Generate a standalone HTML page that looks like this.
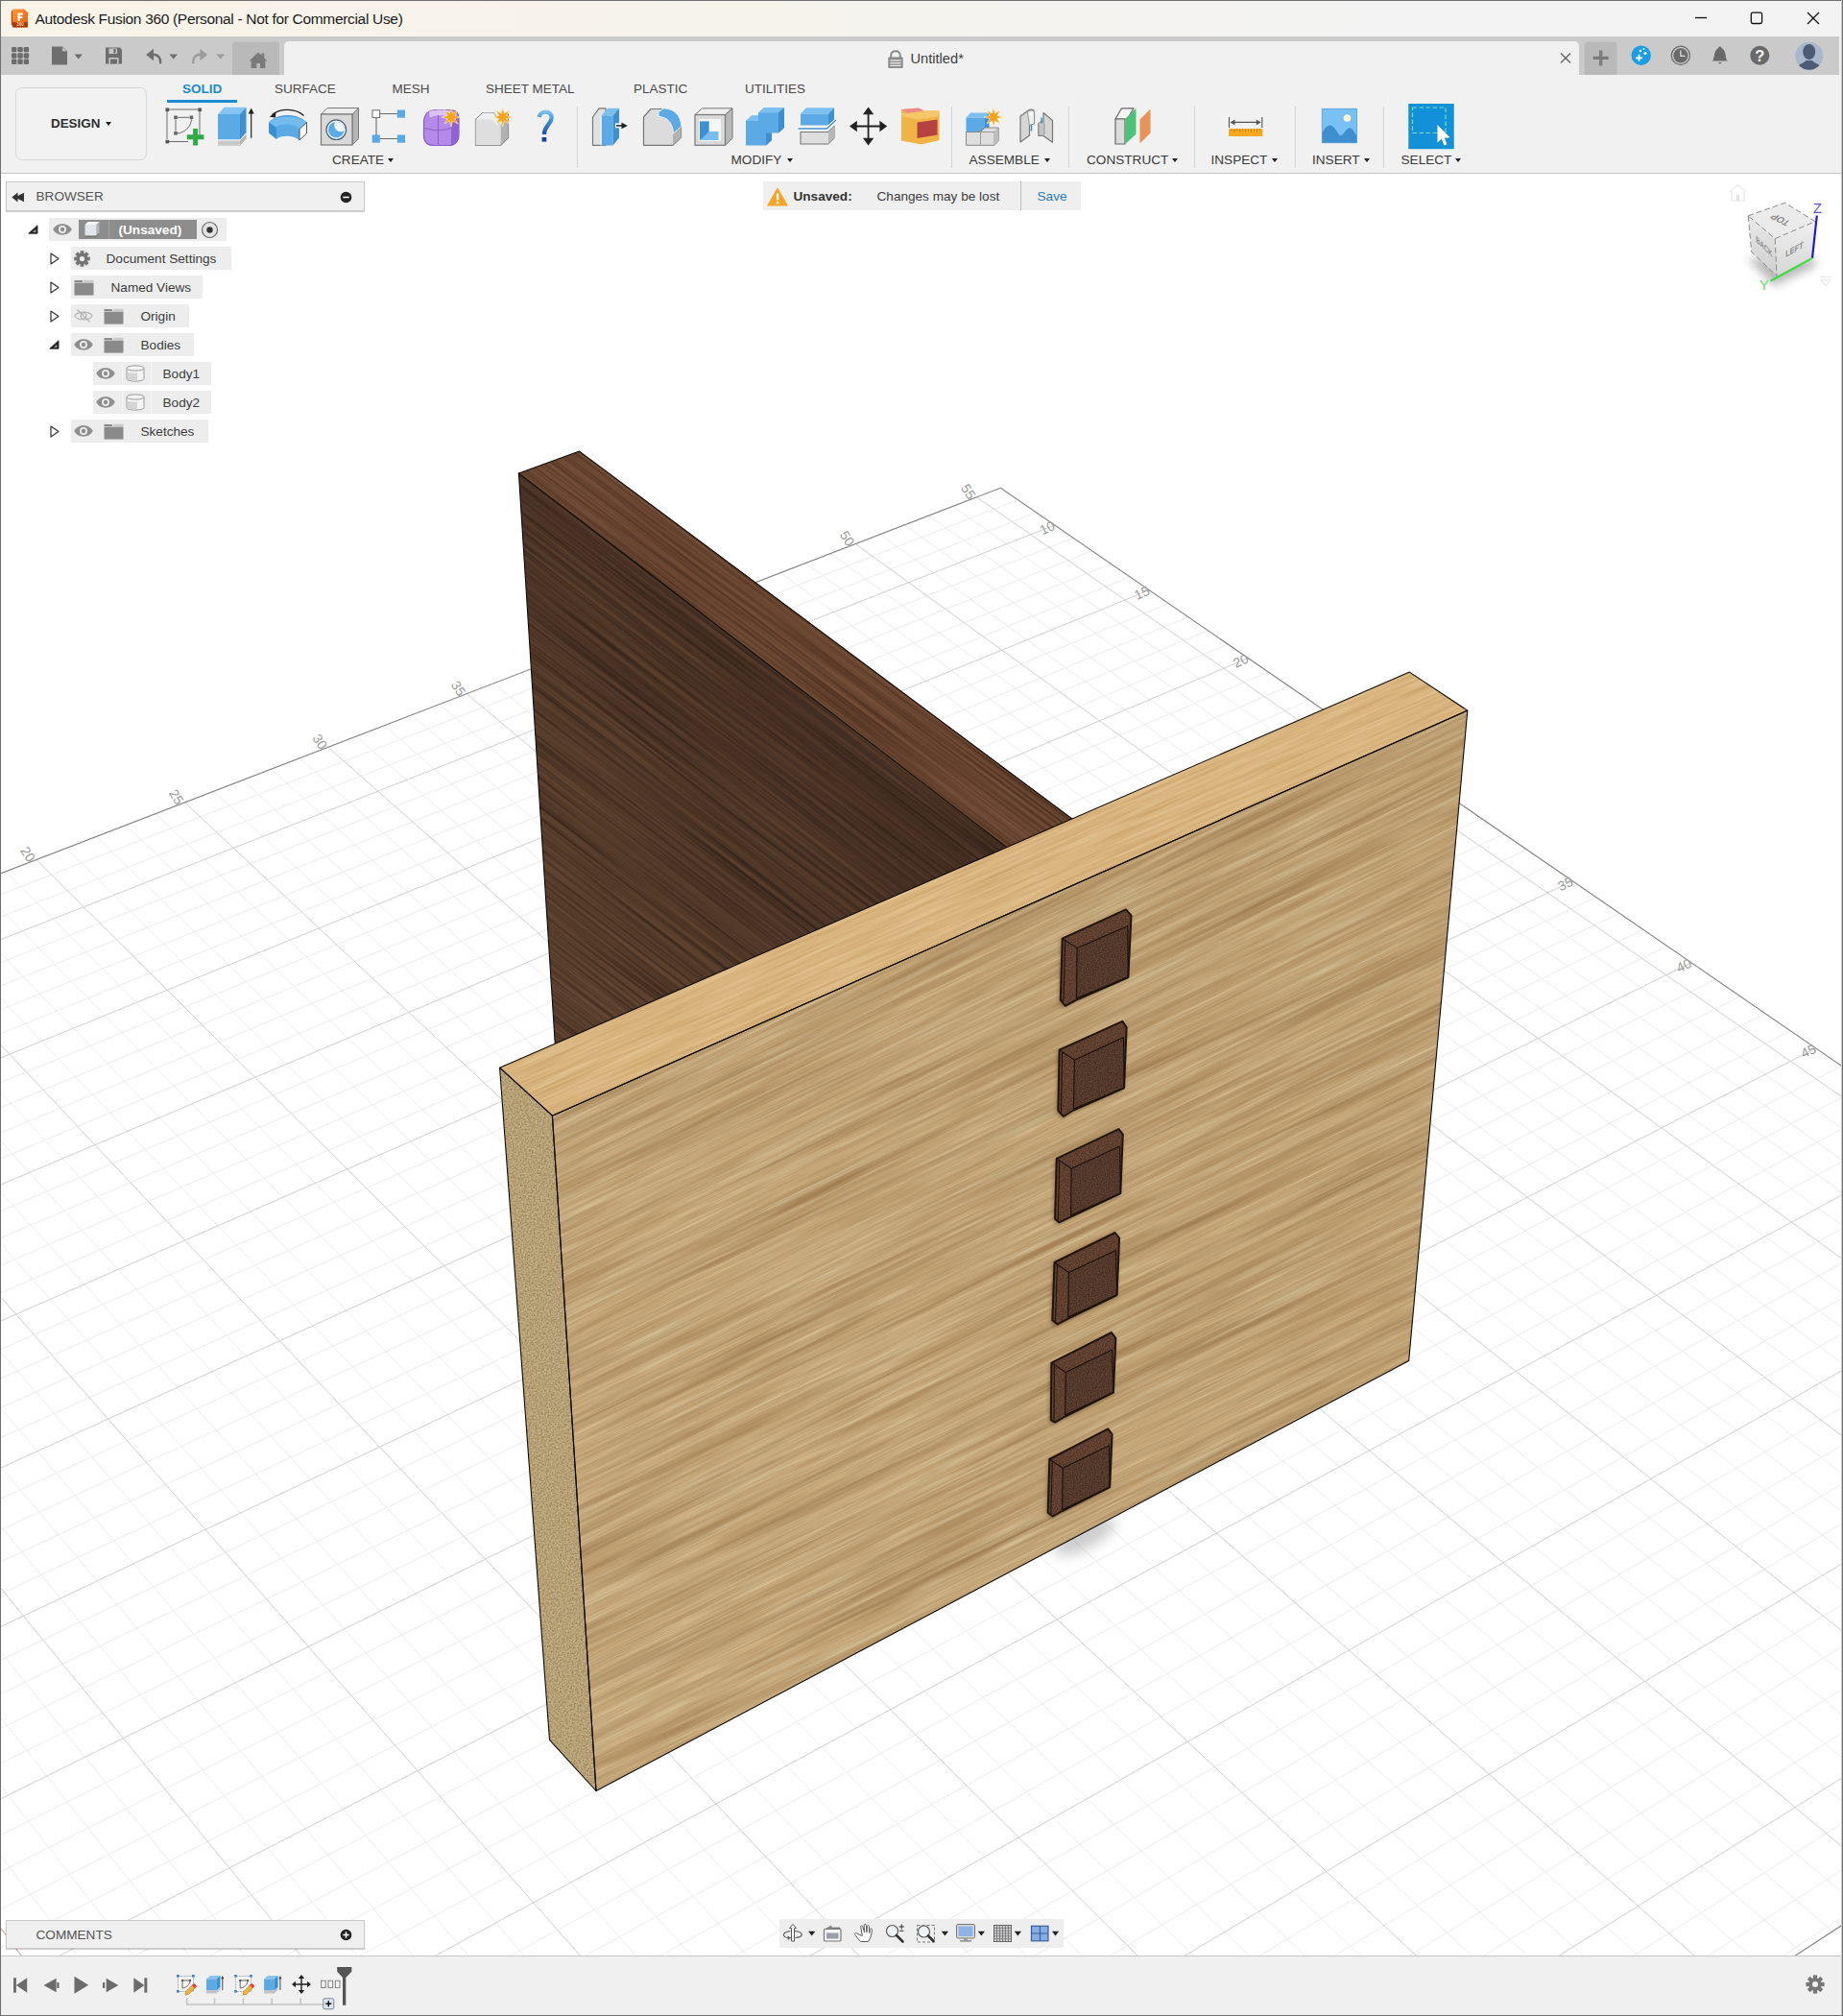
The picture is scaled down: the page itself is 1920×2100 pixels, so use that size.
<!DOCTYPE html>
<html><head><meta charset="utf-8"><title>Autodesk Fusion 360</title><style>
*{box-sizing:border-box;margin:0;padding:0}
html,body{width:1920px;height:2100px;overflow:hidden;background:#fff;font-family:"Liberation Sans",sans-serif}
.a{position:absolute}
.t{position:absolute;white-space:nowrap;line-height:1}
#titlebar{left:0;top:0;width:1920px;height:38px;background:linear-gradient(90deg,#f8f4ea 0%,#f7f3ea 30%,#f4f3ef 55%,#f3f3f3 75%)}
#band{left:0;top:38px;width:1916px;height:40px;background:#cacaca}
#toolbar{left:0;top:78px;width:1920px;height:103px;background:#f1f1f1;border-bottom:1px solid #c4c4c4}
#tlbar{left:0;top:2037px;width:1920px;height:62px;background:#f0f0f0;border-top:1px solid #c6c6c6}
.tab{font-size:13.5px;color:#4a4a4a;top:85.5px;}
.grp{font-size:13.6px;color:#3a3a3a;top:160px}
.sep{position:absolute;top:111px;width:1px;height:64px;background:#d2d2d2}
.row{position:absolute;height:24px;background:#ededed}
.rt{position:absolute;white-space:nowrap;font-size:13.6px;color:#3c3c3c;line-height:24px;top:0.5px}
.dd{position:absolute;width:0;height:0;border-left:3.5px solid transparent;border-right:3.5px solid transparent;border-top:4.5px solid #222}
</style></head><body><svg id="scene" width="1920" height="1856" viewBox="0 181 1920 1856" style="position:absolute;left:0;top:181px">
<defs>
<style>
.mi{stroke:#ebebf0;stroke-width:1}
.ma{stroke:#cfcfd2;stroke-width:1}
.ed{stroke:#808080;stroke-width:1.1}
.ol{stroke:#0c0806;stroke-width:1.1;fill:none;stroke-linejoin:round;stroke-linecap:round}
.gl{font-family:"Liberation Sans",sans-serif;font-size:14px;fill:#9a9a9a}
</style><filter id="fLfd" x="0" y="0" width="100%" height="100%" filterUnits="objectBoundingBox" color-interpolation-filters="sRGB">
<feTurbulence type="fractalNoise" baseFrequency="0.003 0.09" numOctaves="3" seed="4" result="n"/>
<feColorMatrix in="n" type="matrix" values="0 0 0 0 0.6 0 0 0 0 0.47 0 0 0 0 0.3 1.6 0 0 0 -0.62"/></filter>
<filter id="fLfl" x="0" y="0" width="100%" height="100%" filterUnits="objectBoundingBox" color-interpolation-filters="sRGB">
<feTurbulence type="fractalNoise" baseFrequency="0.005 0.3" numOctaves="2" seed="9" result="n"/>
<feColorMatrix in="n" type="matrix" values="0 0 0 0 0.9 0 0 0 0 0.83 0 0 0 0 0.68 1.3 0 0 0 -0.52"/></filter>
<filter id="fLff" x="0" y="0" width="100%" height="100%" filterUnits="objectBoundingBox" color-interpolation-filters="sRGB">
<feTurbulence type="fractalNoise" baseFrequency="0.02 0.9" numOctaves="1" seed="11" result="n"/>
<feColorMatrix in="n" type="matrix" values="0 0 0 0 0.58 0 0 0 0 0.44 0 0 0 0 0.26 0.8 0 0 0 -0.27"/></filter>
<filter id="fLt" x="0" y="0" width="100%" height="100%" filterUnits="objectBoundingBox" color-interpolation-filters="sRGB">
<feTurbulence type="fractalNoise" baseFrequency="0.012 0.5" numOctaves="3" seed="7" result="n"/>
<feColorMatrix in="n" type="matrix" values="0 0 0 0 0.74 0 0 0 0 0.55 0 0 0 0 0.32 1.1 0 0 0 -0.42"/></filter>
<filter id="fLtl" x="0" y="0" width="100%" height="100%" filterUnits="objectBoundingBox" color-interpolation-filters="sRGB">
<feTurbulence type="fractalNoise" baseFrequency="0.01 0.3" numOctaves="2" seed="17" result="n"/>
<feColorMatrix in="n" type="matrix" values="0 0 0 0 0.93 0 0 0 0 0.82 0 0 0 0 0.64 1.2 0 0 0 -0.48"/></filter>
<filter id="fLs" x="0" y="0" width="100%" height="100%" filterUnits="objectBoundingBox" color-interpolation-filters="sRGB">
<feTurbulence type="fractalNoise" baseFrequency="0.55 0.55" numOctaves="2" seed="2" result="n"/>
<feColorMatrix in="n" type="matrix" values="0 0 0 0 0.45 0 0 0 0 0.35 0 0 0 0 0.18 1.2 0 0 0 -0.42"/></filter>
<filter id="fLsl" x="0" y="0" width="100%" height="100%" filterUnits="objectBoundingBox" color-interpolation-filters="sRGB">
<feTurbulence type="fractalNoise" baseFrequency="0.5 0.5" numOctaves="1" seed="12" result="n"/>
<feColorMatrix in="n" type="matrix" values="0 0 0 0 0.88 0 0 0 0 0.8 0 0 0 0 0.62 1.0 0 0 0 -0.38"/></filter>
<filter id="fDt" x="0" y="0" width="100%" height="100%" filterUnits="objectBoundingBox" color-interpolation-filters="sRGB">
<feTurbulence type="fractalNoise" baseFrequency="0.005 0.5" numOctaves="3" seed="5" result="n"/>
<feColorMatrix in="n" type="matrix" values="0 0 0 0 0.25 0 0 0 0 0.14 0 0 0 0 0.08 1.5 0 0 0 -0.52"/></filter>
<filter id="fDtl" x="0" y="0" width="100%" height="100%" filterUnits="objectBoundingBox" color-interpolation-filters="sRGB">
<feTurbulence type="fractalNoise" baseFrequency="0.004 0.3" numOctaves="2" seed="15" result="n"/>
<feColorMatrix in="n" type="matrix" values="0 0 0 0 0.55 0 0 0 0 0.38 0 0 0 0 0.27 1.2 0 0 0 -0.5"/></filter>
<filter id="fDf" x="0" y="0" width="100%" height="100%" filterUnits="objectBoundingBox" color-interpolation-filters="sRGB">
<feTurbulence type="fractalNoise" baseFrequency="0.004 0.4" numOctaves="3" seed="8" result="n"/>
<feColorMatrix in="n" type="matrix" values="0 0 0 0 0.16 0 0 0 0 0.1 0 0 0 0 0.06 1.5 0 0 0 -0.52"/></filter>
<filter id="fDfl" x="0" y="0" width="100%" height="100%" filterUnits="objectBoundingBox" color-interpolation-filters="sRGB">
<feTurbulence type="fractalNoise" baseFrequency="0.004 0.25" numOctaves="2" seed="18" result="n"/>
<feColorMatrix in="n" type="matrix" values="0 0 0 0 0.42 0 0 0 0 0.29 0 0 0 0 0.2 1.3 0 0 0 -0.5"/></filter>
<filter id="fT" x="0" y="0" width="100%" height="100%" filterUnits="objectBoundingBox" color-interpolation-filters="sRGB">
<feTurbulence type="fractalNoise" baseFrequency="0.7 0.7" numOctaves="2" seed="3" result="n"/>
<feColorMatrix in="n" type="matrix" values="0 0 0 0 0.16 0 0 0 0 0.09 0 0 0 0 0.05 1.2 0 0 0 -0.46"/></filter>
<filter id="fTl" x="0" y="0" width="100%" height="100%" filterUnits="objectBoundingBox" color-interpolation-filters="sRGB">
<feTurbulence type="fractalNoise" baseFrequency="0.8 0.8" numOctaves="1" seed="13" result="n"/>
<feColorMatrix in="n" type="matrix" values="0 0 0 0 0.55 0 0 0 0 0.4 0 0 0 0 0.3 1.0 0 0 0 -0.42"/></filter>
<linearGradient id="gDf" gradientUnits="userSpaceOnUse" x1="950" y1="780" x2="600" y2="1040"><stop offset="0" stop-color="#3f2b20"/><stop offset="0.5" stop-color="#50382a"/><stop offset="1" stop-color="#624533"/></linearGradient>
<linearGradient id="gDt" gradientUnits="userSpaceOnUse" x1="560" y1="480" x2="1080" y2="870"><stop offset="0" stop-color="#6c4935"/><stop offset="1" stop-color="#674531"/></linearGradient>
<linearGradient id="gLf" gradientUnits="userSpaceOnUse" x1="1480" y1="800" x2="650" y2="1750"><stop offset="0" stop-color="#c1a375"/><stop offset="1" stop-color="#ccaf82"/></linearGradient><filter id="blur2" x="-30%" y="-30%" width="160%" height="160%"><feGaussianBlur stdDeviation="2"/></filter><filter id="blur8" x="-50%" y="-50%" width="200%" height="200%"><feGaussianBlur stdDeviation="7"/></filter></defs>
<line class="mi" x1="-1101.0" y1="1334.4" x2="40.0" y2="3228.4"/>
<line class="mi" x1="-1061.0" y1="1319.0" x2="92.4" y2="3194.2"/>
<line class="mi" x1="-981.9" y1="1288.5" x2="195.4" y2="3127.2"/>
<line class="mi" x1="-942.8" y1="1273.5" x2="246.0" y2="3094.3"/>
<line class="mi" x1="-904.1" y1="1258.5" x2="296.0" y2="3061.7"/>
<line class="mi" x1="-865.6" y1="1243.7" x2="345.5" y2="3029.5"/>
<line class="mi" x1="-789.6" y1="1214.4" x2="442.6" y2="2966.3"/>
<line class="mi" x1="-752.0" y1="1199.9" x2="490.4" y2="2935.2"/>
<line class="mi" x1="-714.7" y1="1185.5" x2="537.6" y2="2904.5"/>
<line class="mi" x1="-677.7" y1="1171.3" x2="584.3" y2="2874.1"/>
<line class="mi" x1="-604.6" y1="1143.1" x2="676.1" y2="2814.3"/>
<line class="mi" x1="-568.5" y1="1129.2" x2="721.2" y2="2785.0"/>
<line class="mi" x1="-532.6" y1="1115.4" x2="765.9" y2="2755.9"/>
<line class="mi" x1="-497.0" y1="1101.6" x2="810.0" y2="2727.2"/>
<line class="mi" x1="-426.7" y1="1074.5" x2="896.9" y2="2670.6"/>
<line class="mi" x1="-391.9" y1="1061.1" x2="939.7" y2="2642.8"/>
<line class="mi" x1="-357.3" y1="1047.8" x2="981.9" y2="2615.3"/>
<line class="mi" x1="-323.1" y1="1034.6" x2="1023.8" y2="2588.1"/>
<line class="mi" x1="-255.3" y1="1008.5" x2="1106.1" y2="2534.5"/>
<line class="mi" x1="-221.8" y1="995.5" x2="1146.6" y2="2508.1"/>
<line class="mi" x1="-188.5" y1="982.7" x2="1186.7" y2="2482.0"/>
<line class="mi" x1="-155.5" y1="970.0" x2="1226.4" y2="2456.2"/>
<line class="mi" x1="-90.1" y1="944.8" x2="1304.5" y2="2405.3"/>
<line class="mi" x1="-57.8" y1="932.4" x2="1343.0" y2="2380.3"/>
<line class="mi" x1="-25.7" y1="920.0" x2="1381.1" y2="2355.5"/>
<line class="mi" x1="6.1" y1="907.7" x2="1418.8" y2="2331.0"/>
<line class="mi" x1="69.1" y1="883.4" x2="1493.0" y2="2282.6"/>
<line class="mi" x1="100.3" y1="871.4" x2="1529.6" y2="2258.8"/>
<line class="mi" x1="131.2" y1="859.5" x2="1565.8" y2="2235.3"/>
<line class="mi" x1="162.0" y1="847.6" x2="1601.7" y2="2211.9"/>
<line class="mi" x1="222.8" y1="824.2" x2="1672.3" y2="2165.9"/>
<line class="mi" x1="252.9" y1="812.6" x2="1707.1" y2="2143.3"/>
<line class="mi" x1="282.8" y1="801.1" x2="1741.6" y2="2120.8"/>
<line class="mi" x1="312.4" y1="789.7" x2="1775.7" y2="2098.6"/>
<line class="mi" x1="371.2" y1="767.0" x2="1843.1" y2="2054.8"/>
<line class="mi" x1="400.2" y1="755.8" x2="1876.2" y2="2033.2"/>
<line class="mi" x1="429.1" y1="744.7" x2="1909.1" y2="2011.8"/>
<line class="mi" x1="457.8" y1="733.7" x2="1941.6" y2="1990.6"/>
<line class="mi" x1="514.5" y1="711.8" x2="2005.8" y2="1948.9"/>
<line class="mi" x1="542.6" y1="701.0" x2="2037.5" y2="1928.3"/>
<line class="mi" x1="570.5" y1="690.2" x2="2068.8" y2="1907.9"/>
<line class="mi" x1="598.2" y1="679.5" x2="2099.9" y2="1887.6"/>
<line class="mi" x1="653.1" y1="658.4" x2="2161.2" y2="1847.7"/>
<line class="mi" x1="680.2" y1="647.9" x2="2191.4" y2="1828.1"/>
<line class="mi" x1="707.2" y1="637.5" x2="2221.4" y2="1808.6"/>
<line class="mi" x1="734.0" y1="627.2" x2="2251.1" y2="1789.2"/>
<line class="mi" x1="787.1" y1="606.7" x2="2309.7" y2="1751.1"/>
<line class="mi" x1="813.4" y1="596.6" x2="2338.6" y2="1732.3"/>
<line class="mi" x1="839.5" y1="586.5" x2="2367.2" y2="1713.7"/>
<line class="mi" x1="865.4" y1="576.5" x2="2395.6" y2="1695.2"/>
<line class="mi" x1="916.8" y1="556.7" x2="2451.7" y2="1658.7"/>
<line class="mi" x1="942.2" y1="546.9" x2="2479.3" y2="1640.7"/>
<line class="mi" x1="967.5" y1="537.2" x2="2506.7" y2="1622.8"/>
<line class="mi" x1="992.6" y1="527.5" x2="2533.9" y2="1605.2"/>
<line class="mi" x1="-1089.0" y1="1354.4" x2="1060.3" y2="520.7"/>
<line class="mi" x1="-1076.2" y1="1375.6" x2="1079.4" y2="533.8"/>
<line class="mi" x1="-1050.2" y1="1418.8" x2="1118.0" y2="560.3"/>
<line class="mi" x1="-1037.0" y1="1440.7" x2="1137.6" y2="573.7"/>
<line class="mi" x1="-1023.7" y1="1462.9" x2="1157.3" y2="587.3"/>
<line class="mi" x1="-1010.2" y1="1485.3" x2="1177.2" y2="600.9"/>
<line class="mi" x1="-982.7" y1="1530.9" x2="1217.5" y2="628.6"/>
<line class="mi" x1="-968.7" y1="1554.1" x2="1237.9" y2="642.7"/>
<line class="mi" x1="-954.6" y1="1577.5" x2="1258.5" y2="656.8"/>
<line class="mi" x1="-940.3" y1="1601.2" x2="1279.2" y2="671.1"/>
<line class="mi" x1="-911.3" y1="1649.4" x2="1321.3" y2="700.0"/>
<line class="mi" x1="-896.5" y1="1674.0" x2="1342.7" y2="714.7"/>
<line class="mi" x1="-881.5" y1="1698.8" x2="1364.2" y2="729.5"/>
<line class="mi" x1="-866.4" y1="1723.9" x2="1385.9" y2="744.4"/>
<line class="mi" x1="-835.6" y1="1775.0" x2="1429.9" y2="774.6"/>
<line class="mi" x1="-819.9" y1="1801.0" x2="1452.2" y2="790.0"/>
<line class="mi" x1="-804.1" y1="1827.4" x2="1474.7" y2="805.4"/>
<line class="mi" x1="-788.0" y1="1854.0" x2="1497.4" y2="821.0"/>
<line class="mi" x1="-755.3" y1="1908.3" x2="1543.5" y2="852.7"/>
<line class="mi" x1="-738.7" y1="1935.9" x2="1566.9" y2="868.8"/>
<line class="mi" x1="-721.8" y1="1963.9" x2="1590.4" y2="885.0"/>
<line class="mi" x1="-704.8" y1="1992.2" x2="1614.2" y2="901.3"/>
<line class="mi" x1="-670.0" y1="2049.9" x2="1662.5" y2="934.5"/>
<line class="mi" x1="-652.3" y1="2079.3" x2="1687.0" y2="951.3"/>
<line class="mi" x1="-634.4" y1="2109.1" x2="1711.7" y2="968.3"/>
<line class="mi" x1="-616.2" y1="2139.3" x2="1736.7" y2="985.5"/>
<line class="mi" x1="-579.1" y1="2200.8" x2="1787.3" y2="1020.3"/>
<line class="mi" x1="-560.2" y1="2232.1" x2="1813.0" y2="1037.9"/>
<line class="mi" x1="-541.1" y1="2263.9" x2="1839.0" y2="1055.7"/>
<line class="mi" x1="-521.7" y1="2296.1" x2="1865.2" y2="1073.8"/>
<line class="mi" x1="-482.1" y1="2361.8" x2="1918.4" y2="1110.3"/>
<line class="mi" x1="-462.0" y1="2395.3" x2="1945.4" y2="1128.9"/>
<line class="mi" x1="-441.5" y1="2429.2" x2="1972.6" y2="1147.6"/>
<line class="mi" x1="-420.7" y1="2463.7" x2="2000.2" y2="1166.5"/>
<line class="mi" x1="-378.4" y1="2534.0" x2="2056.1" y2="1205.0"/>
<line class="mi" x1="-356.8" y1="2569.8" x2="2084.5" y2="1224.5"/>
<line class="mi" x1="-334.9" y1="2606.2" x2="2113.2" y2="1244.2"/>
<line class="mi" x1="-312.6" y1="2643.1" x2="2142.2" y2="1264.1"/>
<line class="mi" x1="-267.2" y1="2718.6" x2="2201.1" y2="1304.6"/>
<line class="mi" x1="-244.0" y1="2757.1" x2="2231.0" y2="1325.2"/>
<line class="mi" x1="-220.4" y1="2796.2" x2="2261.2" y2="1345.9"/>
<line class="mi" x1="-196.5" y1="2835.8" x2="2291.8" y2="1366.9"/>
<line class="mi" x1="-147.7" y1="2917.0" x2="2353.9" y2="1409.6"/>
<line class="mi" x1="-122.7" y1="2958.4" x2="2385.4" y2="1431.3"/>
<line class="mi" x1="-97.3" y1="3000.5" x2="2417.3" y2="1453.2"/>
<line class="mi" x1="-71.6" y1="3043.3" x2="2449.6" y2="1475.4"/>
<line class="mi" x1="-18.8" y1="3130.8" x2="2515.1" y2="1520.4"/>
<line class="mi" x1="8.1" y1="3175.6" x2="2548.5" y2="1543.3"/>
<line class="mi" x1="35.5" y1="3221.0" x2="2582.2" y2="1566.5"/>
<line class="ma" x1="-1021.3" y1="1303.7" x2="144.2" y2="3160.5"/>
<line class="ma" x1="-827.4" y1="1229.0" x2="394.3" y2="2997.7"/>
<line class="ma" x1="-641.0" y1="1157.1" x2="630.5" y2="2844.0"/>
<line class="ma" x1="-461.7" y1="1088.0" x2="853.7" y2="2698.7"/>
<line class="ma" x1="-289.0" y1="1021.5" x2="1065.2" y2="2561.1"/>
<line class="ma" x1="-122.7" y1="957.4" x2="1265.7" y2="2430.6"/>
<line class="ma" x1="37.7" y1="895.5" x2="1456.1" y2="2306.7"/>
<line class="ma" x1="192.5" y1="835.9" x2="1637.2" y2="2188.8"/>
<line class="ma" x1="341.9" y1="778.3" x2="1809.6" y2="2076.6"/>
<line class="ma" x1="486.2" y1="722.7" x2="1973.9" y2="1969.7"/>
<line class="ma" x1="625.7" y1="668.9" x2="2130.7" y2="1867.6"/>
<line class="ma" x1="760.6" y1="616.9" x2="2280.5" y2="1770.1"/>
<line class="ma" x1="891.2" y1="566.6" x2="2423.8" y2="1676.9"/>
<line class="ma" x1="1017.6" y1="517.9" x2="2560.9" y2="1587.6"/>
<line class="ma" x1="-1063.3" y1="1397.1" x2="1098.6" y2="547.0"/>
<line class="ma" x1="-996.5" y1="1508.0" x2="1197.2" y2="614.7"/>
<line class="ma" x1="-925.9" y1="1625.2" x2="1300.2" y2="685.5"/>
<line class="ma" x1="-851.1" y1="1749.3" x2="1407.8" y2="759.4"/>
<line class="ma" x1="-771.8" y1="1881.0" x2="1520.4" y2="836.8"/>
<line class="ma" x1="-687.5" y1="2020.9" x2="1638.3" y2="917.8"/>
<line class="ma" x1="-597.8" y1="2169.8" x2="1761.9" y2="1002.8"/>
<line class="ma" x1="-502.1" y1="2328.7" x2="1891.6" y2="1091.9"/>
<line class="ma" x1="-399.7" y1="2498.6" x2="2028.0" y2="1185.7"/>
<line class="ma" x1="-290.1" y1="2680.6" x2="2171.5" y2="1284.3"/>
<line class="ma" x1="-172.3" y1="2876.1" x2="2322.7" y2="1388.1"/>
<line class="ma" x1="-45.4" y1="3086.7" x2="2482.2" y2="1497.8"/>
<line class="ed" x1="-1101.0" y1="1334.4" x2="1042.4" y2="508.3"/>
<line class="ed" x1="1042.4" y1="508.3" x2="2587.6" y2="1570.2"/>
<line class="ed" x1="40.0" y1="3228.4" x2="2587.6" y2="1570.2"/>
<line x1="-641.0" y1="1157.1" x2="630.5" y2="2844.0" stroke="#d8a0a0" stroke-width="1"/>
<text class="gl" transform="translate(29.2,899.0) rotate(57)" text-anchor="end">20</text>
<text class="gl" transform="translate(184.0,839.4) rotate(57)" text-anchor="end">25</text>
<text class="gl" transform="translate(333.4,781.8) rotate(57)" text-anchor="end">30</text>
<text class="gl" transform="translate(477.7,726.2) rotate(57)" text-anchor="end">35</text>
<text class="gl" transform="translate(882.7,570.1) rotate(57)" text-anchor="end">50</text>
<text class="gl" transform="translate(1009.1,521.4) rotate(57)" text-anchor="end">55</text>
<text class="gl" transform="translate(1100.1,551.0) rotate(-25)" text-anchor="end">10</text>
<text class="gl" transform="translate(1198.7,618.7) rotate(-25)" text-anchor="end">15</text>
<text class="gl" transform="translate(1301.7,689.5) rotate(-25)" text-anchor="end">20</text>
<text class="gl" transform="translate(1639.8,921.8) rotate(-25)" text-anchor="end">35</text>
<text class="gl" transform="translate(1763.4,1006.8) rotate(-25)" text-anchor="end">40</text>
<text class="gl" transform="translate(1893.1,1095.9) rotate(-25)" text-anchor="end">45</text>
<ellipse cx="1130" cy="1600" rx="36" ry="13" fill="#9a9a9a" opacity="0.5" filter="url(#blur8)" transform="rotate(-28 1130 1600)"/>
<clipPath id="cDt"><polygon points="540.4,492.9 603.6,470.1 1125.0,859.0 1056.0,888.0"/></clipPath><g clip-path="url(#cDt)"><polygon points="540.4,492.9 603.6,470.1 1125.0,859.0 1056.0,888.0" fill="url(#gDt)"/><rect x="463" y="310" width="739" height="739" fill="none" filter="url(#fDt)" transform="rotate(36.6 833 679)"/><rect x="463" y="310" width="739" height="739" fill="none" filter="url(#fDtl)" transform="rotate(36.6 833 679)"/></g>
<clipPath id="cDf"><polygon points="540.4,492.9 1056.0,888.0 1050.0,895.0 578.8,1096.0"/></clipPath><g clip-path="url(#cDf)"><polygon points="540.4,492.9 1056.0,888.0 1050.0,895.0 578.8,1096.0" fill="url(#gDf)"/><rect x="391" y="388" width="813" height="813" fill="none" filter="url(#fDf)" transform="rotate(37.2 798 794)"/><rect x="391" y="388" width="813" height="813" fill="none" filter="url(#fDfl)" transform="rotate(37.2 798 794)"/></g>
<polyline class="ol" points="1056.0,888.0 540.4,492.9 603.6,470.1 1125.0,859.0"/>
<polyline class="ol" points="578.8,1096.0 540.4,492.9"/>
<clipPath id="cLt"><polygon points="520.6,1112.2 1468.4,700.1 1528.8,740.1 575.4,1162.2"/></clipPath><g clip-path="url(#cLt)"><polygon points="520.6,1112.2 1468.4,700.1 1528.8,740.1 575.4,1162.2" fill="#d9b57f"/><rect x="460" y="367" width="1129" height="1129" fill="none" filter="url(#fLt)" transform="rotate(-23.6 1025 931)"/><rect x="460" y="367" width="1129" height="1129" fill="none" filter="url(#fLtl)" transform="rotate(-23.6 1025 931)"/></g>
<clipPath id="cLf"><polygon points="575.4,1162.2 1528.8,740.1 1467.7,1417.4 621.0,1865.5"/></clipPath><g clip-path="url(#cLf)"><polygon points="575.4,1162.2 1528.8,740.1 1467.7,1417.4 621.0,1865.5" fill="url(#gLf)"/><rect x="305" y="555" width="1495" height="1495" fill="none" filter="url(#fLfd)" transform="rotate(-25.8 1052 1303)"/><rect x="305" y="555" width="1495" height="1495" fill="none" filter="url(#fLfl)" transform="rotate(-25.8 1052 1303)"/><rect x="305" y="555" width="1495" height="1495" fill="none" filter="url(#fLff)" transform="rotate(-25.8 1052 1303)"/></g>
<g clip-path="url(#cLf)" opacity="0.55"><rect x="300" y="500" width="1500" height="1600" fill="none" /></g>
<clipPath id="cLs"><polygon points="520.6,1112.2 575.4,1162.2 621.0,1865.5 572.5,1812.3"/></clipPath><g clip-path="url(#cLs)"><polygon points="520.6,1112.2 575.4,1162.2 621.0,1865.5 572.5,1812.3" fill="#bda77e"/><rect x="181" y="1099" width="780" height="780" fill="none" filter="url(#fLs)" transform="rotate(0 571 1489)"/><rect x="181" y="1099" width="780" height="780" fill="none" filter="url(#fLsl)" transform="rotate(0 571 1489)"/></g>
<polygon class="ol" points="520.6,1112.2 1468.4,700.1 1528.8,740.1 575.4,1162.2"/>
<polygon class="ol" points="575.4,1162.2 1528.8,740.1 1467.7,1417.4 621.0,1865.5"/>
<polygon class="ol" points="520.6,1112.2 575.4,1162.2 621.0,1865.5 572.5,1812.3"/>
<polygon points="1106.7,977.7 1173.0,947.4 1178.5,953.6 1175.4,1018.0 1121.5,1041.5 1109.8,1047.8 1104.8,1041.6" fill="#4a3018" opacity="0.5" transform="translate(-1.5,2)" filter="url(#blur2)"/>
<clipPath id="cTo0"><polygon points="1106.7,977.7 1173.0,947.4 1178.5,953.6 1175.4,1018.0 1121.5,1041.5 1109.8,1047.8 1104.8,1041.6"/></clipPath><g clip-path="url(#cTo0)"><polygon points="1106.7,977.7 1173.0,947.4 1178.5,953.6 1175.4,1018.0 1121.5,1041.5 1109.8,1047.8 1104.8,1041.6" fill="#634232"/><rect x="1069" y="925" width="145" height="145" fill="none" filter="url(#fT)" transform="rotate(0 1142 998)"/><rect x="1069" y="925" width="145" height="145" fill="none" filter="url(#fTl)" transform="rotate(0 1142 998)"/></g>
<clipPath id="cTi0"><polygon points="1122.1,987.6 1174.8,964.7 1175.4,1018.0 1121.5,1039.7"/></clipPath><g clip-path="url(#cTi0)"><polygon points="1122.1,987.6 1174.8,964.7 1175.4,1018.0 1121.5,1039.7" fill="#54392c"/><rect x="1092" y="946" width="112" height="112" fill="none" filter="url(#fT)" transform="rotate(0 1148 1002)"/><rect x="1092" y="946" width="112" height="112" fill="none" filter="url(#fTl)" transform="rotate(0 1148 1002)"/></g>
<polygon class="ol" style="stroke-width:2;stroke:#22140d" points="1106.7,977.7 1173.0,947.4 1178.5,953.6 1175.4,1018.0 1121.5,1041.5 1109.8,1047.8 1104.8,1041.6"/>
<polygon class="ol" style="stroke-width:1.1;stroke:#1a100b" points="1122.1,987.6 1174.8,964.7 1175.4,1018.0 1121.5,1039.7"/>
<line class="ol" style="stroke-width:1.1;stroke:#1a100b" x1="1106.7" y1="977.7" x2="1122.1" y2="987.6"/>
<line class="ol" style="stroke-width:1;stroke:#1a100b" x1="1109.7" y1="980.2" x2="1108.0" y2="1042.6"/>
<polygon points="1103.6,1093.6 1169.3,1063.9 1173.6,1070.1 1171.1,1133.3 1118.4,1156.5 1107.9,1163.0 1102.3,1156.8" fill="#4a3018" opacity="0.5" transform="translate(-1.5,2)" filter="url(#blur2)"/>
<clipPath id="cTo1"><polygon points="1103.6,1093.6 1169.3,1063.9 1173.6,1070.1 1171.1,1133.3 1118.4,1156.5 1107.9,1163.0 1102.3,1156.8"/></clipPath><g clip-path="url(#cTo1)"><polygon points="1103.6,1093.6 1169.3,1063.9 1173.6,1070.1 1171.1,1133.3 1118.4,1156.5 1107.9,1163.0 1102.3,1156.8" fill="#634232"/><rect x="1067" y="1042" width="142" height="142" fill="none" filter="url(#fT)" transform="rotate(0 1138 1113)"/><rect x="1067" y="1042" width="142" height="142" fill="none" filter="url(#fTl)" transform="rotate(0 1138 1113)"/></g>
<clipPath id="cTi1"><polygon points="1119.4,1104.2 1170.5,1080.6 1171.1,1133.3 1118.4,1155.0"/></clipPath><g clip-path="url(#cTi1)"><polygon points="1119.4,1104.2 1170.5,1080.6 1171.1,1133.3 1118.4,1155.0" fill="#54392c"/><rect x="1089" y="1062" width="111" height="111" fill="none" filter="url(#fT)" transform="rotate(0 1145 1118)"/><rect x="1089" y="1062" width="111" height="111" fill="none" filter="url(#fTl)" transform="rotate(0 1145 1118)"/></g>
<polygon class="ol" style="stroke-width:2;stroke:#22140d" points="1103.6,1093.6 1169.3,1063.9 1173.6,1070.1 1171.1,1133.3 1118.4,1156.5 1107.9,1163.0 1102.3,1156.8"/>
<polygon class="ol" style="stroke-width:1.1;stroke:#1a100b" points="1119.4,1104.2 1170.5,1080.6 1171.1,1133.3 1118.4,1155.0"/>
<line class="ol" style="stroke-width:1.1;stroke:#1a100b" x1="1103.6" y1="1093.6" x2="1119.4" y2="1104.2"/>
<line class="ol" style="stroke-width:1;stroke:#1a100b" x1="1106.6" y1="1096.1" x2="1105.5" y2="1157.8"/>
<polygon points="1100.7,1206.9 1165.5,1176.1 1169.8,1181.7 1167.3,1243.1 1115.6,1267.5 1103.5,1273.4 1099.1,1269.7" fill="#4a3018" opacity="0.5" transform="translate(-1.5,2)" filter="url(#blur2)"/>
<clipPath id="cTo2"><polygon points="1100.7,1206.9 1165.5,1176.1 1169.8,1181.7 1167.3,1243.1 1115.6,1267.5 1103.5,1273.4 1099.1,1269.7"/></clipPath><g clip-path="url(#cTo2)"><polygon points="1100.7,1206.9 1165.5,1176.1 1169.8,1181.7 1167.3,1243.1 1115.6,1267.5 1103.5,1273.4 1099.1,1269.7" fill="#634232"/><rect x="1064" y="1155" width="140" height="140" fill="none" filter="url(#fT)" transform="rotate(0 1134 1225)"/><rect x="1064" y="1155" width="140" height="140" fill="none" filter="url(#fTl)" transform="rotate(0 1134 1225)"/></g>
<clipPath id="cTi2"><polygon points="1116.1,1217.3 1166.7,1194.1 1167.3,1243.1 1115.6,1266.0"/></clipPath><g clip-path="url(#cTi2)"><polygon points="1116.1,1217.3 1166.7,1194.1 1167.3,1243.1 1115.6,1266.0" fill="#54392c"/><rect x="1087" y="1176" width="109" height="109" fill="none" filter="url(#fT)" transform="rotate(0 1141 1230)"/><rect x="1087" y="1176" width="109" height="109" fill="none" filter="url(#fTl)" transform="rotate(0 1141 1230)"/></g>
<polygon class="ol" style="stroke-width:2;stroke:#22140d" points="1100.7,1206.9 1165.5,1176.1 1169.8,1181.7 1167.3,1243.1 1115.6,1267.5 1103.5,1273.4 1099.1,1269.7"/>
<polygon class="ol" style="stroke-width:1.1;stroke:#1a100b" points="1116.1,1217.3 1166.7,1194.1 1167.3,1243.1 1115.6,1266.0"/>
<line class="ol" style="stroke-width:1.1;stroke:#1a100b" x1="1100.7" y1="1206.9" x2="1116.1" y2="1217.3"/>
<line class="ol" style="stroke-width:1;stroke:#1a100b" x1="1103.7" y1="1209.4" x2="1102.3" y2="1270.7"/>
<polygon points="1098.5,1315.0 1161.7,1284.0 1166.1,1289.5 1163.6,1349.0 1112.8,1373.5 1101.6,1379.4 1096.3,1375.1" fill="#4a3018" opacity="0.5" transform="translate(-1.5,2)" filter="url(#blur2)"/>
<clipPath id="cTo3"><polygon points="1098.5,1315.0 1161.7,1284.0 1166.1,1289.5 1163.6,1349.0 1112.8,1373.5 1101.6,1379.4 1096.3,1375.1"/></clipPath><g clip-path="url(#cTo3)"><polygon points="1098.5,1315.0 1161.7,1284.0 1166.1,1289.5 1163.6,1349.0 1112.8,1373.5 1101.6,1379.4 1096.3,1375.1" fill="#634232"/><rect x="1062" y="1263" width="138" height="138" fill="none" filter="url(#fT)" transform="rotate(0 1131 1332)"/><rect x="1062" y="1263" width="138" height="138" fill="none" filter="url(#fTl)" transform="rotate(0 1131 1332)"/></g>
<clipPath id="cTi3"><polygon points="1113.4,1325.5 1162.4,1302.6 1163.6,1349.0 1112.8,1372.0"/></clipPath><g clip-path="url(#cTi3)"><polygon points="1113.4,1325.5 1162.4,1302.6 1163.6,1349.0 1112.8,1372.0" fill="#54392c"/><rect x="1085" y="1284" width="106" height="106" fill="none" filter="url(#fT)" transform="rotate(0 1138 1337)"/><rect x="1085" y="1284" width="106" height="106" fill="none" filter="url(#fTl)" transform="rotate(0 1138 1337)"/></g>
<polygon class="ol" style="stroke-width:2;stroke:#22140d" points="1098.5,1315.0 1161.7,1284.0 1166.1,1289.5 1163.6,1349.0 1112.8,1373.5 1101.6,1379.4 1096.3,1375.1"/>
<polygon class="ol" style="stroke-width:1.1;stroke:#1a100b" points="1113.4,1325.5 1162.4,1302.6 1163.6,1349.0 1112.8,1372.0"/>
<line class="ol" style="stroke-width:1.1;stroke:#1a100b" x1="1098.5" y1="1315.0" x2="1113.4" y2="1325.5"/>
<line class="ol" style="stroke-width:1;stroke:#1a100b" x1="1101.5" y1="1317.5" x2="1099.5" y2="1376.1"/>
<polygon points="1095.4,1419.6 1158.0,1388.0 1162.4,1394.2 1159.9,1450.6 1109.7,1475.5 1099.1,1481.6 1094.8,1479.1" fill="#4a3018" opacity="0.5" transform="translate(-1.5,2)" filter="url(#blur2)"/>
<clipPath id="cTo4"><polygon points="1095.4,1419.6 1158.0,1388.0 1162.4,1394.2 1159.9,1450.6 1109.7,1475.5 1099.1,1481.6 1094.8,1479.1"/></clipPath><g clip-path="url(#cTo4)"><polygon points="1095.4,1419.6 1158.0,1388.0 1162.4,1394.2 1159.9,1450.6 1109.7,1475.5 1099.1,1481.6 1094.8,1479.1" fill="#634232"/><rect x="1061" y="1367" width="135" height="135" fill="none" filter="url(#fT)" transform="rotate(0 1129 1435)"/><rect x="1061" y="1367" width="135" height="135" fill="none" filter="url(#fTl)" transform="rotate(0 1129 1435)"/></g>
<clipPath id="cTi4"><polygon points="1110.3,1429.5 1158.6,1405.9 1159.9,1450.6 1109.7,1474.1"/></clipPath><g clip-path="url(#cTi4)"><polygon points="1110.3,1429.5 1158.6,1405.9 1159.9,1450.6 1109.7,1474.1" fill="#54392c"/><rect x="1082" y="1388" width="105" height="105" fill="none" filter="url(#fT)" transform="rotate(0 1135 1440)"/><rect x="1082" y="1388" width="105" height="105" fill="none" filter="url(#fTl)" transform="rotate(0 1135 1440)"/></g>
<polygon class="ol" style="stroke-width:2;stroke:#22140d" points="1095.4,1419.6 1158.0,1388.0 1162.4,1394.2 1159.9,1450.6 1109.7,1475.5 1099.1,1481.6 1094.8,1479.1"/>
<polygon class="ol" style="stroke-width:1.1;stroke:#1a100b" points="1110.3,1429.5 1158.6,1405.9 1159.9,1450.6 1109.7,1474.1"/>
<line class="ol" style="stroke-width:1.1;stroke:#1a100b" x1="1095.4" y1="1419.6" x2="1110.3" y2="1429.5"/>
<line class="ol" style="stroke-width:1;stroke:#1a100b" x1="1098.4" y1="1422.1" x2="1098.0" y2="1480.1"/>
<polygon points="1093.3,1520.0 1154.3,1488.4 1158.6,1494.0 1156.2,1549.1 1106.6,1574.0 1096.7,1579.5 1091.7,1575.8" fill="#4a3018" opacity="0.5" transform="translate(-1.5,2)" filter="url(#blur2)"/>
<clipPath id="cTo5"><polygon points="1093.3,1520.0 1154.3,1488.4 1158.6,1494.0 1156.2,1549.1 1106.6,1574.0 1096.7,1579.5 1091.7,1575.8"/></clipPath><g clip-path="url(#cTo5)"><polygon points="1093.3,1520.0 1154.3,1488.4 1158.6,1494.0 1156.2,1549.1 1106.6,1574.0 1096.7,1579.5 1091.7,1575.8" fill="#634232"/><rect x="1059" y="1467" width="133" height="133" fill="none" filter="url(#fT)" transform="rotate(0 1125 1534)"/><rect x="1059" y="1467" width="133" height="133" fill="none" filter="url(#fTl)" transform="rotate(0 1125 1534)"/></g>
<clipPath id="cTi5"><polygon points="1107.2,1529.3 1155.5,1505.7 1156.2,1549.1 1106.6,1572.7"/></clipPath><g clip-path="url(#cTi5)"><polygon points="1107.2,1529.3 1155.5,1505.7 1156.2,1549.1 1106.6,1572.7" fill="#54392c"/><rect x="1080" y="1488" width="103" height="103" fill="none" filter="url(#fT)" transform="rotate(0 1131 1539)"/><rect x="1080" y="1488" width="103" height="103" fill="none" filter="url(#fTl)" transform="rotate(0 1131 1539)"/></g>
<polygon class="ol" style="stroke-width:2;stroke:#22140d" points="1093.3,1520.0 1154.3,1488.4 1158.6,1494.0 1156.2,1549.1 1106.6,1574.0 1096.7,1579.5 1091.7,1575.8"/>
<polygon class="ol" style="stroke-width:1.1;stroke:#1a100b" points="1107.2,1529.3 1155.5,1505.7 1156.2,1549.1 1106.6,1572.7"/>
<line class="ol" style="stroke-width:1.1;stroke:#1a100b" x1="1093.3" y1="1520.0" x2="1107.2" y2="1529.3"/>
<line class="ol" style="stroke-width:1;stroke:#1a100b" x1="1096.3" y1="1522.5" x2="1094.9" y2="1576.8"/>
</svg><div id="titlebar" class="a"></div><div id="band" class="a"></div><div class="a" style="left:1916px;top:38px;width:4px;height:40px;background:#f0f0f0"></div><div id="toolbar" class="a"></div><div id="tlbar" class="a"></div><svg class="a" style="left:11px;top:9px" width="19" height="20" viewBox="0 0 19 20"><defs><linearGradient id="fg" x1="0" y1="0" x2="1" y2="1"><stop offset="0" stop-color="#ff9a3c"/><stop offset="1" stop-color="#e8590c"/></linearGradient></defs><path d="M2 1.5 Q2 0.5 3 0.5 H14 L18 4 V18 Q18 19.5 16.5 19.5 H3.5 Q2 19.5 2 18Z" fill="url(#fg)"/><path d="M0.8 3 L2 1.5 V18 L0.8 16.5Z" fill="#b8460a"/><rect x="2" y="14" width="16" height="5.5" rx="1" fill="#a33c07"/><path d="M7.5 4.5 H13 V6.5 H9.8 V8.2 H12.4 V10.1 H9.8 V12.8 H7.5Z" fill="#fff"/><text x="10" y="18.300" text-anchor="middle" font-family="Liberation Sans,sans-serif" font-weight="bold" font-size="4.600" fill="#ffc59a">360</text></svg><div class="t" id="ttl" style="left:36.5px;top:11.5px;font-size:15.5px;color:#1b1b1b;letter-spacing:-0.32px">Autodesk Fusion 360 (Personal - Not for Commercial Use)</div><svg class="a" style="left:1760px;top:8px" width="150" height="22" viewBox="1760 8 150 22"><g stroke="#111" stroke-width="1.3" fill="none"><path d="M1766 18.5 H1778"/><rect x="1824.3" y="13.2" width="11.3" height="11.3" rx="1.8"/><path d="M1883 13 L1895 25 M1895 13 L1883 25"/></g></svg><svg class="a" style="left:0;top:38px" width="300" height="40" viewBox="0 38 300 40"><rect x="12.00" y="48.90" width="5.400" height="5.400" rx="1.200" fill="#6c6c6c"/><rect x="12.00" y="55.25" width="5.400" height="5.400" rx="1.200" fill="#6c6c6c"/><rect x="12.00" y="61.60" width="5.400" height="5.400" rx="1.200" fill="#6c6c6c"/><rect x="18.35" y="48.90" width="5.400" height="5.400" rx="1.200" fill="#6c6c6c"/><rect x="18.35" y="55.25" width="5.400" height="5.400" rx="1.200" fill="#6c6c6c"/><rect x="18.35" y="61.60" width="5.400" height="5.400" rx="1.200" fill="#6c6c6c"/><rect x="24.70" y="48.90" width="5.400" height="5.400" rx="1.200" fill="#6c6c6c"/><rect x="24.70" y="55.25" width="5.400" height="5.400" rx="1.200" fill="#6c6c6c"/><rect x="24.70" y="61.60" width="5.400" height="5.400" rx="1.200" fill="#6c6c6c"/><path d="M54 48.5 H64.5 L70 54 V67.5 H54Z" fill="#6e6e6e"/><path d="M64.8 48.5 V53.7 H70Z" fill="#c9c9c9" stroke="#6e6e6e" stroke-width="0.6"/><path d="M77.5 56.5 H86 L81.75 61.5Z" fill="#6e6e6e"/><path d="M110 49.5 H125 L127 51.5 V66.5 H110Z" fill="#6e6e6e"/><rect x="113.5" y="50.5" width="8.5" height="5.5" fill="#c9c9c9"/><rect x="118.3" y="51" width="2.3" height="4.3" fill="#6e6e6e"/><rect x="113.5" y="60" width="10" height="6.5" fill="#c9c9c9"/><rect x="115" y="61.5" width="7" height="5" fill="#6e6e6e"/><path d="M159 56.800 C164.500 56.800 167.200 59.800 167.200 65.300" stroke="#6e6e6e" stroke-width="2.400" fill="none" stroke-linecap="round"/><path d="M152.200 57 L160 50.800 V63.200Z" fill="#6e6e6e"/><path d="M176.500 56.500 H185 L180.750 61.500Z" fill="#6e6e6e"/><path d="M209.400 56.800 C203.900 56.800 201.200 59.800 201.200 65.300" stroke="#9c9c9c" stroke-width="2.400" fill="none" stroke-linecap="round"/><path d="M216.200 57 L208.400 50.800 V63.200Z" fill="#9c9c9c"/><path d="M225.500 56.500 H234 L229.750 61.500Z" fill="#9c9c9c"/><path d="M242 78 V47 Q242 43.5 245.500 43.5 H287.500 Q291 43.500 291 47 V78Z" fill="#b9b9b9"/><path d="M259.500 63.500 L269 54.500 L272.500 57.800 V55.500 H275.200 V60.300 L278.500 63.500 H276.300 V71 H271 V66 H267.300 V71 H261.700 V63.500Z" fill="#7a7a7a"/></svg><div class="a" style="left:296px;top:43px;width:1349px;height:36px;background:#f1f1f1;border-radius:5px 5px 0 0"></div><svg class="a" style="left:925px;top:52px" width="16" height="20" viewBox="0 0 16 20"><path d="M3.2 8 V5.5 C3.2 -0.3 12.8 -0.3 12.8 5.5 V8" fill="none" stroke="#8a8a8a" stroke-width="2"/><rect x="0.3" y="7.500" width="15.4" height="11.500" rx="0.8" fill="#8a8a8a"/><rect x="2.3" y="10.300" width="11.400" height="1.400" fill="#e6e6e6"/><rect x="2.3" y="13" width="11.400" height="1.400" fill="#e6e6e6"/><rect x="2.3" y="15.700" width="11.400" height="1.400" fill="#e6e6e6"/></svg><div class="t" id="untitled" style="left:948.5px;top:54px;font-size:14.65px;color:#3f3f3f">Untitled*</div><svg class="a" style="left:1600px;top:38px" width="316" height="40" viewBox="1600 38 316 40"><path d="M1626 55.500 L1636 65.500 M1636 55.500 L1626 65.500" stroke="#6a6a6a" stroke-width="1.5"/><path d="M1650.500 78 V47 Q1650.500 43.500 1654 43.500 H1681 Q1684.500 43.500 1684.500 47 V78Z" fill="#b9b9b9"/><path d="M1659.700 60.400 H1675.700 M1667.700 52.400 V68.400" stroke="#7a7a7a" stroke-width="3.200"/><circle cx="1709.700" cy="57.800" r="10.200" fill="#1a9de2"/><path d="M1704 60.300 H1711 M1707.500 56.800 V63.800" stroke="#fff" stroke-width="1.800"/><circle cx="1709" cy="53" r="1.300" fill="#fff"/><circle cx="1714" cy="55.500" r="1.600" fill="#fff"/><circle cx="1712.500" cy="51" r="0.900" fill="#fff"/><circle cx="1750.900" cy="57.800" r="9.600" fill="none" stroke="#6a6a6a" stroke-width="1.200"/><circle cx="1750.900" cy="57.800" r="7.600" fill="#6a6a6a"/><path d="M1750.900 52.500 V58.300 H1755.500" stroke="#ddd" stroke-width="1.300" fill="none"/><path d="M1784 63.500 C1786.500 61 1785 52.500 1790 50.300 C1790 47.800 1793.600 47.800 1793.600 50.300 C1798.600 52.500 1797.100 61 1799.600 63.500Z" fill="#6a6a6a"/><path d="M1789.800 65 H1793.800 Q1791.800 67.800 1789.800 65Z" fill="#6a6a6a"/><circle cx="1833.300" cy="57.800" r="10" fill="#6a6a6a"/><text x="1833.300" y="63.600" text-anchor="middle" font-family="Liberation Sans,sans-serif" font-weight="bold" font-size="16.500" fill="#f2f2f2">?</text><clipPath id="av"><circle cx="1884.700" cy="58.200" r="14.500"/></clipPath><circle cx="1884.700" cy="58.200" r="14.500" fill="#a9b7cd"/><g clip-path="url(#av)"><ellipse cx="1884.700" cy="54" rx="6.500" ry="8" fill="#4d5b73"/><path d="M1870 76 C1872 66 1879 66.500 1881.500 63 H1888 C1890.500 66.500 1897.500 66 1899.500 76Z" fill="#4d5b73"/></g></svg><div class="a" style="left:15.500px;top:91px;width:137px;height:76px;border:1px solid #d6d6d6;border-radius:7px;background:#f2f2f2"></div><div class="t" id="design" style="left:53px;top:122px;font-size:13.4px;font-weight:bold;color:#2e2e2e">DESIGN</div><div class="dd" style="left:110.3px;top:127px;border-top-color:#222"></div><div class="t tab" id="tSOLID" style="left:190px;font-weight:bold;color:#1d8bc9">SOLID</div><div class="a" style="left:174px;top:103.500px;width:72.500px;height:3.500px;background:#1d8bd0"></div><div class="t tab" id="tSURF" style="left:286px">SURFACE</div><div class="t tab" id="tMESH" style="left:408.5px">MESH</div><div class="t tab" id="tSM" style="left:506px">SHEET METAL</div><div class="t tab" id="tPL" style="left:660px">PLASTIC</div><div class="t tab" id="tUT" style="left:776px">UTILITIES</div><div class="t grp" id="gCR" style="left:346px">CREATE</div><div class="dd" style="left:404px;top:164.5px;border-top-color:#222"></div><div class="t grp" id="gMO" style="left:761.5px">MODIFY</div><div class="dd" style="left:819.5px;top:164.5px;border-top-color:#222"></div><div class="t grp" id="gAS" style="left:1009.5px">ASSEMBLE</div><div class="dd" style="left:1088px;top:164.5px;border-top-color:#222"></div><div class="t grp" id="gCO" style="left:1132px">CONSTRUCT</div><div class="dd" style="left:1221px;top:164.5px;border-top-color:#222"></div><div class="t grp" id="gIN" style="left:1261.5px">INSPECT</div><div class="dd" style="left:1324.5px;top:164.5px;border-top-color:#222"></div><div class="t grp" id="gINS" style="left:1367px">INSERT</div><div class="dd" style="left:1420.5px;top:164.5px;border-top-color:#222"></div><div class="t grp" id="gSE" style="left:1459.5px">SELECT</div><div class="dd" style="left:1516px;top:164.5px;border-top-color:#222"></div><div class="sep" style="left:601px"></div><div class="sep" style="left:991px"></div><div class="sep" style="left:1113px"></div><div class="sep" style="left:1243.5px"></div><div class="sep" style="left:1348.5px"></div><div class="sep" style="left:1441px"></div><svg class="a" style="left:160px;top:104px" width="1370" height="56" viewBox="160 104 1370 56"><g stroke="#6b6b6b" stroke-width="1" fill="none"><path d="M176 114 H206 M174 116 V145 M208 116 V140 M176 147.500 H196" stroke-dasharray="none"/><path d="M185 122.300 H197 M183 124.500 V136.500" /><path d="M199.500 124.500 C199 132 192 138.500 185 138.800"/></g><rect x="172.5" y="112.5" width="3.600" height="3.600" fill="#555"/><rect x="206.3" y="112.5" width="3.600" height="3.600" fill="#555"/><rect x="172.5" y="145.8" width="3.600" height="3.600" fill="#555"/><rect x="181.2" y="120.5" width="3.600" height="3.600" fill="#666"/><rect x="197.6" y="120.5" width="3.600" height="3.600" fill="#666"/><rect x="181.2" y="137" width="3.600" height="3.600" fill="#666"/><path d="M203.600 134 V151.500 M194.800 142.700 H212.400" stroke="#2faa46" stroke-width="5"/><path d="M227 119 L233.500 111.800 H256.500 L250 119Z" fill="#86c4f4"/><rect x="227" y="119" width="23" height="26.500" fill="#5baae6"/><path d="M250 119 L256.500 111.800 V138.300 L250 145.500Z" fill="#3d8fd1"/><path d="M227 146.500 H250 L256.500 139.500 V144.500 L250 151.500 H227Z" fill="#b4b4b4"/><path d="M227 146.500 H250 V151.500 H227Z" fill="#c9c9c9"/><path d="M227 146 H250 L256.500 139" stroke="#e8f2fa" stroke-width="1" fill="none"/><path d="M261.700 143.800 V116" stroke="#222" stroke-width="1.200"/><path d="M258.700 118.500 L261.700 112.500 L264.700 118.500Z" fill="#222"/><path d="M280 127.500 C288 117.500 311 117.500 319.500 127.500 L319.500 139 C311 131 289 131 288 141.500 L280 136.500Z" fill="#4b9ddd"/><path d="M280 127.500 C288 119.500 311 119.500 319.500 127.500 L312 134.500 C306 128.500 292 128.500 288 133Z" fill="#74bbf0"/><path d="M280 127.500 L288 133 V145 L280 138.500Z" fill="#3d8fd1"/><path d="M288 133 C292 128.500 306 128.500 312 134.500 V146 C306 140.500 292 140.500 288 145Z" fill="#5aaae6"/><path d="M312 134.500 L319.500 127.500 V139 L312 146Z" fill="#fff" stroke="#555" stroke-width="1"/><path d="M316.500 120.500 C308 112.500 292 112.500 283.500 119.500" fill="none" stroke="#222" stroke-width="1.200"/><path d="M280.800 121.800 L287.500 116.200 L287 122.500Z" fill="#222"/><path d="M334.500 119 L341 112.500 H373.500 L367 119Z" fill="#ececec" stroke="#7a7a7a" stroke-width="1"/><path d="M367 119 L373.500 112.500 V144.500 L367 151Z" fill="#b5b5b5" stroke="#7a7a7a" stroke-width="1"/><rect x="334.500" y="119" width="32.500" height="32" fill="#d9d9d9" stroke="#7a7a7a" stroke-width="1.200"/><clipPath id="hc"><circle cx="350.300" cy="135.200" r="8.300"/></clipPath><circle cx="350.300" cy="135.200" r="10.300" fill="#eef5fb" stroke="#4a5f7a" stroke-width="1.200"/><circle cx="350.300" cy="135.200" r="8.300" fill="#5aaae6"/><circle cx="355" cy="130.500" r="6.800" fill="#eef5fb" clip-path="url(#hc)"/><path d="M396 118.500 H414 M392 122.500 V141 M396 144.500 H414" stroke="#6b6b6b" stroke-width="1.100"/><rect x="388" y="114.800" width="7.600" height="7.600" fill="#fff" stroke="#6b6b6b" stroke-width="1"/><rect x="413.8" y="114.5" width="8.200" height="8.200" fill="#5baae6"/><rect x="387.7" y="140.5" width="8.200" height="8.200" fill="#5baae6"/><rect x="413.8" y="140.5" width="8.200" height="8.200" fill="#5baae6"/><path d="M441.500 128 C441.500 119 446 114.500 455 114.500 L470 114.500 C476 114.500 478 118 478 124 L478 141 C478 147 474 151.500 467 151.500 L452 151.500 C445 151.500 441.500 147.500 441.500 141Z" fill="#b48ae8" stroke="#8a5cc8" stroke-width="1.200"/><path d="M447 116.500 C452 114 466 114 471 116 L466 121 C460 119.500 452 120 448 122.500Z" fill="#d9c2f6"/><path d="M470 123 L478 119 V143 C477 147 474 149.500 470 150.500Z" fill="#8f63d2"/><path d="M443 133.500 C452 136.500 462 136.500 470 133 M456.500 120 V151" stroke="#8a5cc8" stroke-width="1" fill="none"/><polygon points="470.0,112.0 471.6,118.1 477.1,114.9 473.9,120.4 480.0,122.0 473.9,123.6 477.1,129.1 471.6,125.9 470.0,132.0 468.4,125.9 462.9,129.1 466.1,123.6 460.0,122.0 466.1,120.4 462.9,114.9 468.4,118.1" fill="#f7a31c" stroke="#fff3d0" stroke-width="0.6"/><path d="M495.500 124.500 L503 117.500 H514 L519 124 L523 119 H529.500 V143.500 L521.500 151.200 H495.500Z" fill="#dcdcdc" stroke="#777" stroke-width="1.200" stroke-linejoin="round"/><path d="M521.500 130 L529.500 122 V143.500 L521.500 151.200Z" fill="#b2b2b2"/><path d="M512 124.500 L519 131 L521.500 130 V151 H495.500 V124.500Z" fill="#dedede"/><path d="M503 117.500 H514 L519 124 L519 131 L512 124.500 H495.500Z" fill="#efefef"/><polygon points="523.8,112.0 525.4,118.1 530.9,114.9 527.7,120.4 533.8,122.0 527.7,123.6 530.9,129.1 525.4,125.9 523.8,132.0 522.2,125.9 516.7,129.1 519.9,123.6 513.8,122.0 519.9,120.4 516.7,114.9 522.2,118.1" fill="#f7a31c" stroke="#fff3d0" stroke-width="0.6"/><defs><linearGradient id="qg2" gradientUnits="userSpaceOnUse" x1="0" y1="114" x2="0" y2="142"><stop offset="0" stop-color="#86cbee"/><stop offset="0.450" stop-color="#3d8cd0"/><stop offset="1" stop-color="#1f46a0"/></linearGradient><linearGradient id="qg" x1="0" y1="0" x2="0" y2="1"><stop offset="0" stop-color="#7cc4ea"/><stop offset="0.5" stop-color="#3a86cc"/><stop offset="1" stop-color="#1a3a98"/></linearGradient></defs><path d="M561.800 122 C562.500 114.800 575.200 114.600 574.600 123 C574.100 129.500 567.200 130.500 566.900 140" fill="none" stroke="url(#qg2)" stroke-width="4.300"/><rect x="564.600" y="143" width="4.700" height="4.600" fill="#1d3f9c"/><path d="M617.500 122 L624 112.800 H631 V151.300 H617.500Z" fill="#e0e0e0" stroke="#777" stroke-width="1.200" stroke-linejoin="round"/><path d="M626.500 120.500 L633 112.800 H645 L638.500 120.500Z" fill="#7cc0f2"/><rect x="626.500" y="120.500" width="12" height="31" fill="#5baae6"/><path d="M638.500 120.500 L645 112.800 V143.500 L638.500 151.500Z" fill="#3d8fd1"/><path d="M626 120.500 V151.500" stroke="#fff" stroke-width="1"/><rect x="641" y="128.300" width="9" height="5" fill="#f2f2f2"/><path d="M642 130.900 H649" stroke="#222" stroke-width="1.500"/><path d="M647.500 127.500 L653.800 130.900 L647.500 134.300Z" fill="#222"/><path d="M670.500 151.300 V122 L678 113.500 H690 C702 114 709 121 709.500 133 V143 L701 151.300Z" fill="#dcdcdc" stroke="#777" stroke-width="1.200" stroke-linejoin="round"/><path d="M701 151.300 V139 L709.500 131.500 V143Z" fill="#b2b2b2"/><path d="M686 116.500 L691.500 112.800 C703 113.500 709 120 709.800 131.500 L701.500 139 C701 129 696 122 686 121.500Z" fill="#5baae6" stroke="#eaf4fc" stroke-width="1"/><path d="M724 119.500 L731.500 112.800 H763 L755.500 119.500Z" fill="#efefef" stroke="#777" stroke-width="1"/><path d="M755.500 119.500 L763 112.800 V144 L755.500 151.300Z" fill="#b8b8b8" stroke="#777" stroke-width="1"/><rect x="724" y="119.500" width="31.500" height="31.800" fill="#d9d9d9" stroke="#777" stroke-width="1.200"/><rect x="728" y="124" width="23" height="23" fill="#f6f6f6"/><path d="M729 126.500 H738.500 V137 H748.500 V146 H729Z" fill="#78bdf0"/><path d="M729 126.500 H738.500 V137 L734 141.500 V131 Z" fill="#3d8fd1"/><path d="M729 126.500 L734 131 V141.500 L729 146Z" fill="#3d8fd1"/><path d="M777 126 L783 120.500 H790 V117.500 L796 112.300 H817 V133 L811 138.500 H804 V146 L798 151.500 H777Z" fill="#5baae6"/><path d="M790 117.500 L796 112.300 H817 L811 117.500Z" fill="#7cc0f2"/><path d="M777 126 L783 120.500 H790 V126Z" fill="#7cc0f2"/><path d="M811 117.500 L817 112.300 V133 L811 138.500Z" fill="#3d8fd1"/><path d="M798 138.500 L804 138.500 V146 L798 151.500Z" fill="#3d8fd1"/><path d="M834 118.500 L840 112.300 H869 L863 118.500Z" fill="#7cc0f2"/><rect x="834" y="118.500" width="29" height="12" fill="#5baae6"/><path d="M863 118.500 L869 112.300 V124.500 L863 130.500Z" fill="#3d8fd1"/><path d="M831.500 134 H861.500 L871 125" fill="none" stroke="#fff" stroke-width="3.500"/><path d="M831.500 134 H861.500 L871 125" fill="none" stroke="#3d8fd1" stroke-width="1.300"/><path d="M834 137.500 H863 L869 131.500 V143.500 L863 150 H834Z" fill="#dedede" stroke="#777" stroke-width="1.100"/><path d="M863 137.500 L869 131.500 V143.500 L863 150Z" fill="#b8b8b8"/><path d="M904.600 116 V147 M889 131.500 H920" stroke="#222" stroke-width="1.800"/><path d="M904.600 111.500 L910.300 119.300 H898.900Z M904.600 151.500 L910.300 143.700 H898.900Z M885 131.500 L892.800 125.800 V137.200Z M924.200 131.500 L916.400 125.800 V137.200Z" fill="#222"/><defs><filter id="b1"><feGaussianBlur stdDeviation="0.7"/></filter></defs><g filter="url(#b1)"><path d="M939 114 L957 112.500 L963 115.500 H978.500 V146 L960 150.500 L939 146.500Z" fill="#f0b345"/><path d="M939 114 L957 112.500 L963 115.500 L946 118Z" fill="#f08a8a"/><path d="M939 118 L946 118 L963 115.500 H978.500 V121 L957 124.500 L939 121Z" fill="#f6c768"/><path d="M955.500 127.500 L976.500 124.500 V140.500 L955.500 144Z" fill="#b5433f"/></g><path d="M1006.500 122.500 L1011 117.500 H1030.500 L1026 122.500Z" fill="#7cc0f2"/><rect x="1006.500" y="122.500" width="19.500" height="15" fill="#5baae6"/><path d="M1026 122.500 L1030.500 117.500 V133 L1026 137.500Z" fill="#3d8fd1"/><path d="M1006.500 137.500 H1021.500 L1026 133 H1040.500 V146.500 L1036 151.300 H1006.500Z" fill="#dedede" stroke="#888" stroke-width="1" stroke-linejoin="round"/><path d="M1021.500 137.500 V151.300 M1021.500 137.500 H1036 V151.300 M1036 137.500 L1040.500 133" stroke="#999" stroke-width="1" fill="none"/><path d="M1036 137.500 L1040.500 133 V146.500 L1036 151.300Z" fill="#bdbdbd"/><polygon points="1035.0,112.0 1036.6,118.1 1042.1,114.9 1038.9,120.4 1045.0,122.0 1038.9,123.6 1042.1,129.1 1036.6,125.9 1035.0,132.0 1033.4,125.9 1027.9,129.1 1031.1,123.6 1025.0,122.0 1031.1,120.4 1027.9,114.9 1033.4,118.1" fill="#f7a31c" stroke="#fff3d0" stroke-width="0.6"/><path d="M1063 121 L1072 114.500 C1074 113.500 1077 114 1077.500 116.500 V128.500 L1072.500 131 V141 L1063 148Z" fill="#d6d6d6" stroke="#777" stroke-width="1.200" stroke-linejoin="round"/><path d="M1070.500 117 C1071 114.500 1076.500 114.500 1077.500 116.500 V128.500 L1072.500 131 Z" fill="#efefef" stroke="#888" stroke-width="0.800"/><path d="M1087 117.500 L1096.500 125.500 V148.300 L1087 141.500 H1082 V128.500 L1087 126.500Z" fill="#d6d6d6" stroke="#777" stroke-width="1.200" stroke-linejoin="round"/><path d="M1082 128.500 C1083 126 1087 126 1088 128.500 V139.500 C1087 142 1083 142 1082 139.500Z" fill="#c4c4c4" stroke="#888" stroke-width="0.800"/><path d="M1074.500 129.500 V136.500 M1085 122.500 V128.500" stroke="#3d8fd1" stroke-width="1.500"/><rect x="1073.200" y="117.800" width="2.200" height="2.200" fill="#fff"/><path d="M1162 124 L1168.500 112.800 H1181 L1174.500 124Z" fill="#f4f4f4" stroke="#666" stroke-width="1.200" stroke-linejoin="round"/><path d="M1162 124 H1172 V150 H1162Z" fill="#dcdcdc" stroke="#666" stroke-width="1.200" stroke-linejoin="round"/><path d="M1172.500 123.500 L1183.500 112.800 V139.500 L1172.500 150Z" fill="#4fc27a"/><path d="M1187.500 124.500 L1198.500 113.500 V138.500 L1187.500 149.500Z" fill="#e8935a"/><rect x="1280" y="134.200" width="35.300" height="7.800" fill="#f7a81e"/><path d="M1282.9 134.200 v2.2" stroke="#a86a00" stroke-width="0.700"/><path d="M1285.9 134.200 v3.5" stroke="#a86a00" stroke-width="0.700"/><path d="M1288.8 134.200 v2.2" stroke="#a86a00" stroke-width="0.700"/><path d="M1291.8 134.200 v3.5" stroke="#a86a00" stroke-width="0.700"/><path d="M1294.7 134.200 v2.2" stroke="#a86a00" stroke-width="0.700"/><path d="M1297.6 134.200 v3.5" stroke="#a86a00" stroke-width="0.700"/><path d="M1300.6 134.200 v2.2" stroke="#a86a00" stroke-width="0.700"/><path d="M1303.5 134.200 v3.5" stroke="#a86a00" stroke-width="0.700"/><path d="M1306.5 134.200 v2.2" stroke="#a86a00" stroke-width="0.700"/><path d="M1309.4 134.200 v3.5" stroke="#a86a00" stroke-width="0.700"/><path d="M1312.3 134.200 v2.2" stroke="#a86a00" stroke-width="0.700"/><path d="M1280.500 122 V133 M1314.800 122 V133 M1283 127.400 H1312.500" stroke="#555" stroke-width="1.100" fill="none"/><path d="M1281.500 127.400 L1286.500 124.600 V130.200Z M1313.800 127.400 L1308.800 124.600 V130.200Z" fill="#555"/><rect x="1377.300" y="113.300" width="36.200" height="35.500" fill="#79c0f4" stroke="#4f9ad8" stroke-width="0.800"/><circle cx="1403.500" cy="123" r="3.800" fill="#fdf6d0"/><path d="M1377.700 148.400 V138 C1383 128 1388 128 1394 139 C1398 145 1400 137 1404 134 C1408 131 1411 138 1413.100 141 V148.400Z" fill="#3f8fd0"/><rect x="1467.300" y="108" width="47.400" height="47.200" fill="#1290d8"/><rect x="1471.500" y="112" width="34.500" height="26.500" fill="none" stroke="#7ee0b8" stroke-width="1.200" stroke-dasharray="4.500 2.500"/><path d="M1497.500 130 L1497.500 148.500 L1501.800 144.800 L1504.500 151.500 L1507.500 150.200 L1504.800 143.800 L1510.500 143.300Z" fill="#fff"/></svg><div class="a" style="left:6px;top:189px;width:374px;height:31px;background:#f0f0f0;border:1px solid #c9c9c9;box-shadow:0 1px 1px rgba(0,0,0,.18)"></div><svg class="a" style="left:12px;top:200px" width="14" height="11" viewBox="0 0 14 11"><path d="M6.5 0.5 V4 L13 0.8 V10.2 L6.5 7 V10.5 L0.3 5.5Z" fill="#333"/></svg><div class="t" style="left:37.5px;top:198px;font-size:13.6px;color:#555">BROWSER</div><svg class="a" style="left:354px;top:198.5px" width="13" height="13"><circle cx="6.5" cy="6.5" r="5.8" fill="#222"/><rect x="3.3" y="5.7" width="6.4" height="1.6" fill="#fff"/></svg><div class="row" style="left:51px;top:227px;width:185px"></div><svg class="a" style="left:28.5px;top:234px" width="11" height="10" viewBox="0 0 11 10"><path d="M10 0.8 V9.2 H0.8Z" fill="#222" stroke="#222" stroke-width="0.8" stroke-linejoin="round"/><path d="M8.3 5 V7.8 H5Z" fill="#bbb"/></svg><svg class="a" style="left:54.5px;top:233px;overflow:visible" width="20" height="12" viewBox="0 0 20 12"><path d="M0.300 6 C4 -1.600 16 -1.600 19.700 6 C16 13.600 4 13.600 0.300 6Z" fill="#8e8e8e"/><circle cx="10" cy="6" r="4" fill="#ededed"/><circle cx="10" cy="6" r="2.200" fill="#8e8e8e"/></svg><div class="a" style="left:82px;top:229px;width:122.5px;height:20px;background:#8d8d8d"></div><div class="a" style="left:113px;top:229px;width:1px;height:20px;background:#a2a2a2"></div><svg class="a" style="left:87px;top:229.500px" width="18" height="18" viewBox="0 0 18 18"><path d="M1.500 4 L4.500 1 H16.500 L13.500 4Z" fill="#f6f7fa"/><path d="M13.500 4 L16.500 1 V13 L13.500 16Z" fill="#aeb3bf"/><rect x="1.500" y="4" width="12" height="12" rx="1" fill="#e3e6ed"/><path d="M1.500 16 H13.500 L16.500 13" fill="none" stroke="#555" stroke-width="0.900"/></svg><div class="t" style="left:123.5px;top:232.5px;font-size:13.6px;font-weight:bold;color:#fff">(Unsaved)</div><svg class="a" style="left:209px;top:229.5px" width="19" height="19"><circle cx="9.5" cy="9.5" r="8" fill="#e3e3e3" stroke="#666" stroke-width="1.2"/><circle cx="9.5" cy="9.5" r="3.2" fill="#333"/></svg><div class="row" style="left:74px;top:257px;width:167px"><div class="rt" style="left:36.5px">Document Settings</div></div><svg class="a" style="left:51.5px;top:262.5px" width="10" height="13" viewBox="0 0 10 13"><path d="M1 1 L9 6.5 L1 12Z" fill="#fff" stroke="#333" stroke-width="1.2" stroke-linejoin="round"/></svg><svg class="a" style="left:76.5px;top:260.5px" width="17" height="17" viewBox="-8.5 -8.5 17 17"><g fill="#757575"><rect x="-1.9" y="-8.3" width="3.8" height="16.6" transform="rotate(0)"/><rect x="-1.9" y="-8.3" width="3.8" height="16.6" transform="rotate(45)"/><rect x="-1.9" y="-8.3" width="3.8" height="16.6" transform="rotate(90)"/><rect x="-1.9" y="-8.3" width="3.8" height="16.6" transform="rotate(135)"/><circle r="6"/></g><circle r="2.6" fill="#ededed"/></svg><div class="row" style="left:74px;top:287px;width:137px"><div class="rt" style="left:41.5px">Named Views</div></div><svg class="a" style="left:51.5px;top:292.5px" width="10" height="13" viewBox="0 0 10 13"><path d="M1 1 L9 6.5 L1 12Z" fill="#fff" stroke="#333" stroke-width="1.2" stroke-linejoin="round"/></svg><svg class="a" style="left:76.5px;top:290.5px" width="21" height="17" viewBox="0 0 21 17"><path d="M0.5 1 H8.5 L9.5 3 H0.5Z" fill="#8a8a8a"/><rect x="0.5" y="3.6" width="20" height="13" fill="#8a8a8a"/><path d="M10 0.8 H20.5 V3 H10.8Z" fill="#c9c9c9"/></svg><div class="row" style="left:74px;top:317px;width:123px"><div class="rt" style="left:72.5px">Origin</div></div><svg class="a" style="left:51.5px;top:322.5px" width="10" height="13" viewBox="0 0 10 13"><path d="M1 1 L9 6.5 L1 12Z" fill="#fff" stroke="#333" stroke-width="1.2" stroke-linejoin="round"/></svg><svg class="a" style="left:77px;top:321px" width="20" height="16" viewBox="0 0 20 16"><path d="M0.8 8 C4 2.8 16 2.8 19.2 8 C16 13.2 4 13.2 0.8 8Z" fill="none" stroke="#b4b4b4" stroke-width="1.2"/><circle cx="10" cy="8" r="3" fill="none" stroke="#b4b4b4" stroke-width="1.2"/><path d="M3.5 1.5 L16.5 14.5" stroke="#b4b4b4" stroke-width="1.4"/></svg><svg class="a" style="left:108px;top:320.5px" width="21" height="17" viewBox="0 0 21 17"><path d="M0.5 1 H8.5 L9.5 3 H0.5Z" fill="#8a8a8a"/><rect x="0.5" y="3.6" width="20" height="13" fill="#8a8a8a"/><path d="M10 0.8 H20.5 V3 H10.8Z" fill="#c9c9c9"/></svg><div class="row" style="left:74px;top:347px;width:128px"><div class="rt" style="left:72.5px">Bodies</div></div><svg class="a" style="left:51px;top:354px" width="11" height="10" viewBox="0 0 11 10"><path d="M10 0.8 V9.2 H0.8Z" fill="#222" stroke="#222" stroke-width="0.8" stroke-linejoin="round"/><path d="M8.3 5 V7.8 H5Z" fill="#bbb"/></svg><svg class="a" style="left:77px;top:353px;overflow:visible" width="20" height="12" viewBox="0 0 20 12"><path d="M0.300 6 C4 -1.600 16 -1.600 19.700 6 C16 13.600 4 13.600 0.300 6Z" fill="#8e8e8e"/><circle cx="10" cy="6" r="4" fill="#ededed"/><circle cx="10" cy="6" r="2.200" fill="#8e8e8e"/></svg><svg class="a" style="left:108px;top:350.5px" width="21" height="17" viewBox="0 0 21 17"><path d="M0.5 1 H8.5 L9.5 3 H0.5Z" fill="#8a8a8a"/><rect x="0.5" y="3.6" width="20" height="13" fill="#8a8a8a"/><path d="M10 0.8 H20.5 V3 H10.8Z" fill="#c9c9c9"/></svg><div class="row" style="left:96.5px;top:377px;width:123px"><div class="rt" style="left:73.0px">Body1</div></div><svg class="a" style="left:99.5px;top:383px;overflow:visible" width="20" height="12" viewBox="0 0 20 12"><path d="M0.300 6 C4 -1.600 16 -1.600 19.700 6 C16 13.600 4 13.600 0.300 6Z" fill="#8e8e8e"/><circle cx="10" cy="6" r="4" fill="#ededed"/><circle cx="10" cy="6" r="2.200" fill="#8e8e8e"/></svg><div class="a" style="left:127px;top:377px;width:1px;height:24px;background:#f6f6f6"></div><div class="a" style="left:157px;top:377px;width:1px;height:24px;background:#f6f6f6"></div><svg class="a" style="left:130.5px;top:380px" width="20" height="18" viewBox="0 0 20 18"><path d="M1 3.5 V14.5 C1 18 19 18 19 14.5 V3.5 C19 0 1 0 1 3.5Z" fill="#f4f4f4" stroke="#9a9a9a" stroke-width="1"/><path d="M1 3.5 C1 7 19 7 19 3.5" fill="none" stroke="#9a9a9a" stroke-width="1"/><path d="M2 8 V14.5 C3 16.5 9 17 12 16.6 V8.6 C8 8.8 4 8.5 2 8Z" fill="#d4d4d4"/></svg><div class="row" style="left:96.5px;top:407px;width:123px"><div class="rt" style="left:73.0px">Body2</div></div><svg class="a" style="left:99.5px;top:413px;overflow:visible" width="20" height="12" viewBox="0 0 20 12"><path d="M0.300 6 C4 -1.600 16 -1.600 19.700 6 C16 13.600 4 13.600 0.300 6Z" fill="#8e8e8e"/><circle cx="10" cy="6" r="4" fill="#ededed"/><circle cx="10" cy="6" r="2.200" fill="#8e8e8e"/></svg><div class="a" style="left:127px;top:407px;width:1px;height:24px;background:#f6f6f6"></div><div class="a" style="left:157px;top:407px;width:1px;height:24px;background:#f6f6f6"></div><svg class="a" style="left:130.5px;top:410px" width="20" height="18" viewBox="0 0 20 18"><path d="M1 3.5 V14.5 C1 18 19 18 19 14.5 V3.5 C19 0 1 0 1 3.5Z" fill="#f4f4f4" stroke="#9a9a9a" stroke-width="1"/><path d="M1 3.5 C1 7 19 7 19 3.5" fill="none" stroke="#9a9a9a" stroke-width="1"/><path d="M2 8 V14.5 C3 16.5 9 17 12 16.6 V8.6 C8 8.8 4 8.5 2 8Z" fill="#d4d4d4"/></svg><div class="row" style="left:74px;top:437px;width:143px"><div class="rt" style="left:72.5px">Sketches</div></div><svg class="a" style="left:51.5px;top:442.5px" width="10" height="13" viewBox="0 0 10 13"><path d="M1 1 L9 6.5 L1 12Z" fill="#fff" stroke="#333" stroke-width="1.2" stroke-linejoin="round"/></svg><svg class="a" style="left:77px;top:443px;overflow:visible" width="20" height="12" viewBox="0 0 20 12"><path d="M0.300 6 C4 -1.600 16 -1.600 19.700 6 C16 13.600 4 13.600 0.300 6Z" fill="#8e8e8e"/><circle cx="10" cy="6" r="4" fill="#ededed"/><circle cx="10" cy="6" r="2.200" fill="#8e8e8e"/></svg><svg class="a" style="left:108px;top:440.5px" width="21" height="17" viewBox="0 0 21 17"><path d="M0.5 1 H8.5 L9.5 3 H0.5Z" fill="#8a8a8a"/><rect x="0.5" y="3.6" width="20" height="13" fill="#8a8a8a"/><path d="M10 0.8 H20.5 V3 H10.8Z" fill="#c9c9c9"/></svg><div class="a" style="left:795px;top:189px;width:331px;height:30px;background:#efefef"></div><svg class="a" style="left:798.500px;top:194.500px" width="22" height="20" viewBox="0 0 22 20"><path d="M11 1 L21.300 19 H0.700Z" fill="#f6a32c" stroke="#f6a32c" stroke-width="1" stroke-linejoin="round"/><rect x="9.900" y="6.500" width="2.300" height="6.800" fill="#fff"/><rect x="9.900" y="14.800" width="2.300" height="2.400" fill="#fff"/></svg><div class="t" id="nUn" style="margin-top:0.7px;left:826.500px;top:197px;font-size:13.6px;font-weight:bold;color:#333">Unsaved:</div><div class="t" id="nCh" style="margin-top:0.7px;left:913.500px;top:197px;font-size:13.6px;color:#3c3c3c">Changes may be lost</div><div class="a" style="left:1063px;top:189px;width:1px;height:30px;background:#bdbdbd"></div><div class="t" id="nSave" style="margin-top:0.7px;left:1080.500px;top:197px;font-size:13.6px;color:#2a7ab8">Save</div><svg class="a" style="left:1790px;top:185px" width="128" height="150" viewBox="1790 185 128 150"><defs><filter id="cb" x="-60%" y="-80%" width="220%" height="260%"><feGaussianBlur stdDeviation="5"/></filter><linearGradient id="cgL" x1="0" y1="0" x2="0" y2="1"><stop offset="0" stop-color="#e9e9e9"/><stop offset="1" stop-color="#cfcfcf"/></linearGradient><linearGradient id="cgR" x1="0" y1="0" x2="0" y2="1"><stop offset="0" stop-color="#f0f0f0"/><stop offset="1" stop-color="#d6d6d6"/></linearGradient></defs><path d="M1801.500 200 L1810.400 192.500 L1819.300 200 M1804 199 V209 H1817 V199" fill="none" stroke="#ededed" stroke-width="1.600"/><rect x="1809" y="203" width="3" height="6" fill="#e4e4e4"/><path d="M1818 262 L1846 291 L1890 270 L1888 262Z" fill="#555" opacity="0.400" filter="url(#cb)" transform="translate(2,7)"/><polygon points="1821.2,224.8 1859.4,211.3 1891,230.7 1849.2,248.6" fill="#ebebeb"/><polygon points="1821.2,224.8 1849.2,248.6 1851,287.4 1824.7,262.4" fill="url(#cgL)"/><polygon points="1849.2,248.6 1891,230.7 1888,268.9 1851,287.4" fill="url(#cgR)"/><g fill="none" stroke="#8a8a8a" stroke-width="1" stroke-dasharray="6 3"><polygon points="1821.2,224.8 1859.4,211.3 1891,230.7 1849.2,248.6"/><polyline points="1821.2,224.8 1824.7,262.4 1851,287.4"/><line x1="1849.2" y1="248.6" x2="1851" y2="287.4"/></g><line x1="1888" y1="268.9" x2="1892.800" y2="224.500" stroke="#1c1ccc" stroke-width="2.200"/><line x1="1888" y1="268.9" x2="1844.400" y2="292.800" stroke="#3fdc3f" stroke-width="2.200"/><text x="1889" y="221.500" font-family="Liberation Sans,sans-serif" font-size="14.500" fill="#5252d6">Z</text><text x="1833" y="301.500" font-family="Liberation Sans,sans-serif" font-size="14.500" fill="#5fe05f">Y</text><g font-family="Liberation Sans,sans-serif" font-size="9.500" fill="#8a8a8a" font-weight="bold"><text transform="translate(1857,226.500) rotate(206) skewX(-20)" text-anchor="middle">TOP</text><text transform="matrix(0.780,-0.420,-0.050,1,1860,268)" >LEFT</text><text transform="matrix(0.620,0.600,0.050,1,1829.500,252)">BACK</text></g><path d="M1896 288.500 H1908 M1896.800 291.500 L1902 297.500 L1907.200 291.500Z" fill="none" stroke="#ececec" stroke-width="1.300"/></svg><div class="a" style="left:6px;top:2000px;width:374px;height:30px;background:#f0f0f0;border:1px solid #c9c9c9;box-shadow:0 1px 1px rgba(0,0,0,.18)"></div><div class="t" id="cmt" style="left:37.500px;top:2008.500px;font-size:13.600px;color:#555">COMMENTS</div><svg class="a" style="left:354px;top:2008.500px" width="13" height="13"><circle cx="6.500" cy="6.500" r="5.800" fill="#222"/><path d="M3.300 6.500 H9.700 M6.500 3.300 V9.700" stroke="#fff" stroke-width="1.500"/></svg><div class="a" style="left:812px;top:1999px;width:296px;height:30px;background:#eeeeee"></div><svg class="a" style="left:812px;top:1999px" width="296" height="30" viewBox="812 1999 296 30"><path d="M826 2004.500 L829.500 2008.500 H827.500 V2022 H824.500 V2008.500 H822.500Z" fill="#fff" stroke="#5a5a5a" stroke-width="1"/><path d="M823.500 2011.500 C813 2013 815 2019 824 2018.500 M828 2011.500 C838 2012.500 837 2018 828.500 2018.300" fill="none" stroke="#5a5a5a" stroke-width="1.200"/><path d="M820.500 2016.500 L823.800 2018.600 L820.800 2021Z" fill="#5a5a5a"/><path d="M842.1 2011.8 H849.3 L845.7 2016.6Z" fill="#222"/><rect x="858.500" y="2009.500" width="17.500" height="12.500" rx="1" fill="#f4f4f4" stroke="#777" stroke-width="1.200"/><rect x="861" y="2013.500" width="12.500" height="6" fill="#9a9ea8"/><path d="M860.500 2009 L866 2006 V2008 H875 V2009.500" fill="#888" stroke="#777" stroke-width="0.800"/><path d="M893.500 2014.500 C891 2012.500 889.500 2014 891.500 2016.500 L896.500 2022.500 H904.500 C907 2019 908 2015 908.500 2010.500 C908.500 2008.500 906.500 2008.500 906.300 2010.500 L905.800 2013.500 L905.500 2007 C905.300 2005 903.300 2005 903.300 2007 L903 2012.800 L902.300 2005.500 C902 2003.800 900 2004 900.200 2005.800 L900.500 2012.800 L898.800 2007 C898.300 2005.300 896.300 2005.800 896.800 2007.500 L898.300 2016.500Z" fill="#fff" stroke="#5a5a5a" stroke-width="1" stroke-linejoin="round"/><circle cx="929.500" cy="2011.500" r="6" fill="#eef4f4" stroke="#5a5a5a" stroke-width="1.200"/><path d="M934 2016 L940.500 2022.500" stroke="#333" stroke-width="2.600" stroke-linecap="round"/><path d="M936.500 2007 H942 M939.250 2004.300 V2009.700 M937 2011.300 H941.500" stroke="#333" stroke-width="1"/><rect x="955.500" y="2005.500" width="18" height="17.500" fill="none" stroke="#777" stroke-width="1" stroke-dasharray="3 2"/><circle cx="962.500" cy="2012" r="6" fill="#eef4f4" stroke="#5a5a5a" stroke-width="1.200"/><path d="M967 2016.500 L972.500 2022" stroke="#333" stroke-width="2.600" stroke-linecap="round"/><path d="M980.8 2011.8 H988.0 L984.4 2016.6Z" fill="#222"/><rect x="996.500" y="2004.500" width="19" height="14.500" rx="1.500" fill="#d8d8d8" stroke="#777" stroke-width="1"/><rect x="998.500" y="2006.500" width="15" height="10.500" fill="#8eb4e6"/><path d="M1004 2019 H1008 V2021 H1012 V2022.800 H1000 V2021 H1004Z" fill="#999"/><path d="M1018.8 2011.8 H1026.0 L1022.4 2016.6Z" fill="#222"/><rect x="1035.500" y="2005.500" width="18" height="17" fill="#d0d0d4" stroke="#666" stroke-width="1"/><path d="M1038.5 2005.500 V2022.500 M1035.500 2008.3 H1053.500" stroke="#666" stroke-width="0.700"/><path d="M1041.5 2005.500 V2022.500 M1035.500 2011.2 H1053.500" stroke="#666" stroke-width="0.700"/><path d="M1044.5 2005.500 V2022.500 M1035.500 2014.0 H1053.500" stroke="#666" stroke-width="0.700"/><path d="M1047.5 2005.500 V2022.500 M1035.500 2016.8 H1053.500" stroke="#666" stroke-width="0.700"/><path d="M1050.5 2005.500 V2022.500 M1035.500 2019.7 H1053.500" stroke="#666" stroke-width="0.700"/><path d="M1056.8 2011.8 H1064.0 L1060.4 2016.6Z" fill="#222"/><rect x="1074.500" y="2006.300" width="17.500" height="15.500" fill="#86aee4" stroke="#3a5f9a" stroke-width="1.200"/><path d="M1083.500 2006.300 V2021.800 M1074.500 2014 H1092" stroke="#3a5f9a" stroke-width="1.200"/><path d="M1095.9 2011.8 H1103.1 L1099.5 2016.6Z" fill="#222"/></svg><svg class="a" style="left:0;top:2040px" width="400" height="58" viewBox="0 2040 400 58"><rect x="14" y="2060.300" width="2.900" height="15.400" fill="#6b6b6b"/><path d="M28.200 2060.300 V2075.700 L16.900 2068Z" fill="#6b6b6b"/><path d="M58.600 2060.700 V2075.300 L45.600 2068Z" fill="#6b6b6b"/><rect x="59.300" y="2065" width="2.200" height="6" fill="#6b6b6b"/><path d="M77.500 2058.800 V2076.800 L92.200 2067.800Z" fill="#6b6b6b"/><rect x="107" y="2065" width="2.200" height="6" fill="#6b6b6b"/><path d="M110.700 2060.700 V2075.300 L123.300 2068Z" fill="#6b6b6b"/><path d="M139.300 2060.300 V2075.700 L150.400 2068Z" fill="#6b6b6b"/><rect x="150.400" y="2060.300" width="2.900" height="15.400" fill="#6b6b6b"/><g transform="translate(184,2057)"><rect x="1.500" y="1.500" width="16" height="16" fill="#f6f6f6" stroke="#8a9ab0" stroke-width="0.800" stroke-dasharray="2 1"/><rect x="0" y="0" width="2.600" height="2.600" fill="#3b7fd4"/><rect x="16" y="0" width="2.600" height="2.600" fill="#3b7fd4"/><rect x="0" y="16" width="2.600" height="2.600" fill="#3b7fd4"/><path d="M6 6 H14 C13.500 11 10 13.500 6 14Z" fill="none" stroke="#666" stroke-width="1"/><rect x="5" y="5" width="2" height="2" fill="#555"/><rect x="13" y="5" width="2" height="2" fill="#555"/><path d="M9.500 17.500 L17 10 L20 13 L12.500 20.500 L8.800 21.200Z" fill="#f0b040" stroke="#b07818" stroke-width="0.500"/><path d="M16 11 L17.500 9.500 C18.500 8.500 21.500 11.500 20.500 12.500 L19 14Z" fill="#e83a3a"/></g><g transform="translate(214.5,2057)"><path d="M0.500 4.500 L4.500 1 H15 L11 4.500Z" fill="#86c4f4"/><rect x="0.500" y="4.500" width="10.500" height="12" fill="#5baae6"/><path d="M11 4.500 L15 1 V13 L11 16.500Z" fill="#3d8fd1"/><path d="M0.500 16.500 H11 L15 13 V15.800 L11 19.500 H0.500Z" fill="#c2c2c2"/><path d="M17.300 16 V3.500" stroke="#333" stroke-width="0.900"/><path d="M15.800 4.300 L17.300 1 L18.800 4.300Z" fill="#333"/></g><g transform="translate(244.2,2057)"><rect x="1.500" y="1.500" width="16" height="16" fill="#f6f6f6" stroke="#8a9ab0" stroke-width="0.800" stroke-dasharray="2 1"/><rect x="0" y="0" width="2.600" height="2.600" fill="#3b7fd4"/><rect x="16" y="0" width="2.600" height="2.600" fill="#3b7fd4"/><rect x="0" y="16" width="2.600" height="2.600" fill="#3b7fd4"/><path d="M6 6 H14 C13.500 11 10 13.500 6 14Z" fill="none" stroke="#666" stroke-width="1"/><rect x="5" y="5" width="2" height="2" fill="#555"/><rect x="13" y="5" width="2" height="2" fill="#555"/><path d="M9.500 17.500 L17 10 L20 13 L12.500 20.500 L8.800 21.200Z" fill="#f0b040" stroke="#b07818" stroke-width="0.500"/><path d="M16 11 L17.500 9.500 C18.500 8.500 21.500 11.500 20.500 12.500 L19 14Z" fill="#e83a3a"/></g><g transform="translate(274.6,2057)"><path d="M0.500 4.500 L4.500 1 H15 L11 4.500Z" fill="#86c4f4"/><rect x="0.500" y="4.500" width="10.500" height="12" fill="#5baae6"/><path d="M11 4.500 L15 1 V13 L11 16.500Z" fill="#3d8fd1"/><path d="M0.500 16.500 H11 L15 13 V15.800 L11 19.500 H0.500Z" fill="#c2c2c2"/><path d="M17.300 16 V3.500" stroke="#333" stroke-width="0.900"/><path d="M15.800 4.300 L17.300 1 L18.800 4.300Z" fill="#333"/></g><path d="M314 2059.500 V2074.500 M306.500 2067 H321.500" stroke="#222" stroke-width="1.400"/><path d="M314 2057 L317.200 2061 H310.800Z M314 2077 L317.200 2073 H310.800Z M304 2067 L308 2063.800 V2070.200Z M324 2067 L320 2063.800 V2070.200Z" fill="#222"/><rect x="334.6" y="2063.300" width="4.600" height="7.200" fill="#f4f4f4" stroke="#8a8a8a" stroke-width="1.100"/><rect x="342.0" y="2063.300" width="4.600" height="7.200" fill="#f4f4f4" stroke="#8a8a8a" stroke-width="1.100"/><rect x="349.4" y="2063.300" width="4.600" height="7.200" fill="#f4f4f4" stroke="#8a8a8a" stroke-width="1.100"/><path d="M194.700 2081.300 V2088.100 H337 M223.500 2081.300 V2088.100 M253.500 2081.300 V2088.100 M283.200 2081.300 V2088.100 M313.200 2081.300 V2088.100" fill="none" stroke="#c2c2c2" stroke-width="1.500"/><rect x="336.800" y="2081.800" width="11" height="11" rx="1.500" fill="#dfe5ee" stroke="#77859a" stroke-width="1"/><path d="M339.300 2087.300 H345.300 M342.300 2084.300 V2090.300" stroke="#111" stroke-width="1.500"/><path d="M351.200 2049 H366.400 V2053.800 L360.300 2059.900 V2088.700 H357 V2059.900 L351.200 2053.800Z" fill="#555"/></svg><svg class="a" style="left:1880px;top:2056px" width="22" height="22" viewBox="-11 -11 22 22"><g fill="#777"><rect x="-2.100" y="-9.600" width="4.200" height="19.200" transform="rotate(0)"/><rect x="-2.100" y="-9.600" width="4.200" height="19.200" transform="rotate(45)"/><rect x="-2.100" y="-9.600" width="4.200" height="19.200" transform="rotate(90)"/><rect x="-2.100" y="-9.600" width="4.200" height="19.200" transform="rotate(135)"/><circle r="6.800"/></g><circle r="3" fill="#f0f0f0"/></svg><div class="a" style="left:0;top:0;width:1920px;height:1px;background:#707070"></div><div class="a" style="left:0;top:0;width:1px;height:2100px;background:#6e6e6e"></div><div class="a" style="left:1918px;top:0;width:1px;height:2100px;background:#c8c8c8"></div><div class="a" style="left:1919px;top:0;width:1px;height:2100px;background:#707070"></div><div class="a" style="left:0;top:2099px;width:1920px;height:1px;background:#707070"></div></body></html>
